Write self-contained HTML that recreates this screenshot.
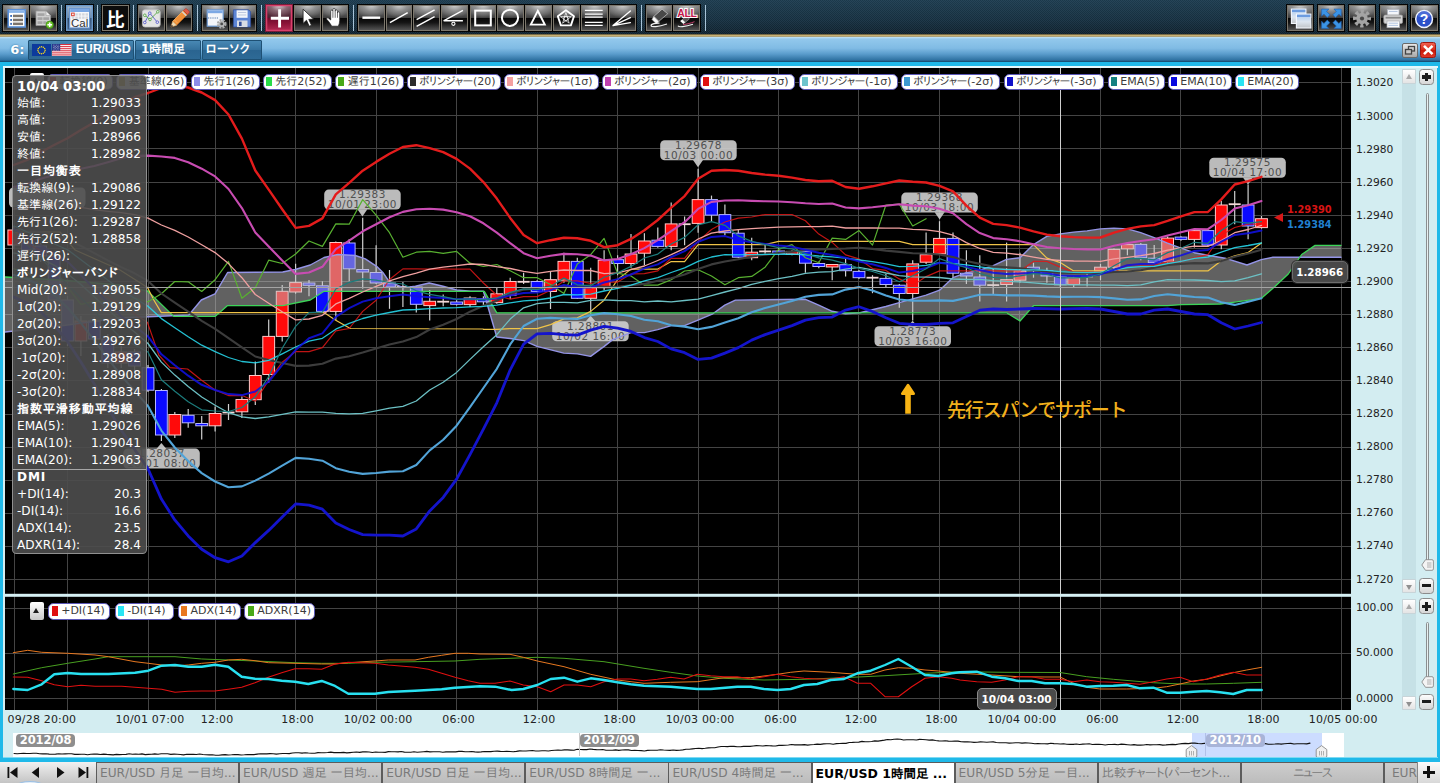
<!DOCTYPE html><html lang="ja"><head><meta charset="utf-8"><title>EUR/USD 1時間足</title><style>
*{box-sizing:border-box;margin:0;padding:0}
html,body{width:1440px;height:783px;overflow:hidden;background:#000}
body{position:relative;font-family:"DejaVu Sans","IPAPGothic","IPAGothic","Liberation Sans","Noto Sans CJK JP",sans-serif;font-size:11px;color:#222}
.abs{position:absolute}
#tb{left:0;top:0;width:1440px;height:35px;background-color:#152c3b;
 background-image:linear-gradient(45deg,rgba(150,190,215,.085) 25%,transparent 25%,transparent 75%,rgba(150,190,215,.085) 75%),linear-gradient(45deg,rgba(150,190,215,.085) 25%,transparent 25%,transparent 75%,rgba(150,190,215,.085) 75%),linear-gradient(180deg,#1c3a4c 0%,#152d3c 60%,#0e1f2a 100%);
 background-size:2px 2px,2px 2px,100% 100%;background-position:0 0,1px 1px,0 0}
#gold{left:0;top:34px;width:1440px;height:3px;background:linear-gradient(180deg,#2a2618 0,#cdb77a 35%,#bca468 75%,#8c9ca0 100%)}
#title{left:0;top:37px;width:1440px;height:25px;background:linear-gradient(180deg,#c4e4f6 0,#92c8ec 8%,#80bbe4 45%,#5a9ccc 68%,#2f72a2 92%,#124566 100%)}
#frame{left:0;top:62px;width:1440px;height:700px;background:#1fb9e9}
#inner{left:3px;top:66px;width:1434px;height:691px;background:#d3edf1}
.btn{position:absolute;top:3.9px;width:28.7px;height:28px;border:1.3px solid #040404;outline:0;
 background:radial-gradient(ellipse 62% 100% at 50% 0%,rgba(215,215,215,.95) 0,rgba(165,165,165,.6) 50%,rgba(90,90,90,0) 100%) 0 0/100% 50% no-repeat,linear-gradient(180deg,#7c7c7c 0,#545454 35%,#3c3c3c 49.9%,#060606 50%,#151515 68%,#5c5c5c 100%);
 box-shadow:inset 0 0 0 1px #7c776c}
.btn svg{position:absolute;left:0;top:0;width:26.1px;height:25.4px}
.btn.sel{background:radial-gradient(ellipse 62% 100% at 50% 0%,rgba(225,215,220,.95) 0,rgba(170,140,150,.55) 50%,rgba(120,60,80,0) 100%) 0 0/100% 50% no-repeat,linear-gradient(180deg,#6c4854 0,#4c2030 49.9%,#6e0c2c 50%,#8c1438 72%,#b42c54 100%);box-shadow:inset 0 0 0 1.3px #d8406c;border-color:#7a1c38}
.btn.hl{box-shadow:inset 0 0 0 1.5px #6a98c8;background:linear-gradient(180deg,#a8bcd0 0,#6c88a4 49%,#2c4868 50%,#46648a 100%)}
.btn.blk{background:#0c0c0c}
.sep{position:absolute;top:5px;width:1px;height:26px;background:#a8c4d8}
.tbtn{position:absolute;top:40px;height:19.500px;border:1px solid #1e5074;border-radius:1px;background:linear-gradient(180deg,#4888b4 0,#34709c 50%,#2a6490 51%,#2e6a96 100%);color:#fff;font-weight:bold;font-size:12px;line-height:17px;white-space:nowrap}
.pill{position:absolute;overflow:hidden;height:16.5px;background:#fff;border:1.3px solid #5c58b8;border-radius:5.5px;font-size:11px;line-height:14px;color:#3c3c3c;white-space:nowrap;padding-left:11.8px}
.pill i{position:absolute;left:2.4px;top:2.3px;width:5.8px;height:9.6px}
.k{display:inline-block;transform:scaleX(.86);transform-origin:0 50%}
.callout{position:absolute;width:76.5px;height:20px;background:rgba(206,206,206,.86);border-radius:4.5px;color:#444;font-size:10.5px;line-height:10.3px;text-align:center;letter-spacing:.5px;padding-top:0;white-space:nowrap}
.ax{position:absolute;left:1356px;font-size:10.7px;color:#222;line-height:12px}
.xl{position:absolute;top:713.5px;font-size:11px;letter-spacing:.17px;color:#222;line-height:12px;white-space:nowrap;transform:translateX(-50%)}
.sb{position:absolute;left:1402px;width:14px;height:14.5px;background:linear-gradient(180deg,#fff,#e4e4e4);border:1px solid #c8d4d8;border-radius:1px}
.sb:after{content:"";position:absolute;left:3px;border:3.5px solid transparent}
.sb.up:after{top:0.5px;border-bottom:5px solid #a8a8a8}
.sb.dn:after{top:5px;border-top:5px solid #909090}
.zb{position:absolute;left:1419.2px;width:14.6px;height:16.4px;border:1px solid #8c8c8c;border-radius:3.5px;background:linear-gradient(180deg,#fdfdfd,#d6d6d6)}
.zb b{position:absolute;left:1.9px;top:5.600px;width:8.800px;height:3.200px;background:#1c1c1c}
.zb.p u{position:absolute;left:4.700px;top:2.800px;width:3.200px;height:8.800px;background:#1c1c1c}
.knob{position:absolute;left:1420.5px;width:13px;height:12px}
#tip{left:12px;top:74.5px;width:135px;height:479px;font-size:12.1px;background:rgba(78,78,78,.9);border:1px solid rgba(170,170,170,.75);border-radius:4.5px;color:#fff}
#tip div{position:absolute;left:4px;right:5.1px;height:17px;line-height:17px;white-space:nowrap}
#tip div span{position:absolute;right:0;top:0}
#tip .b{font-weight:bold;letter-spacing:.85px}#tip .b.l{letter-spacing:0}
.tab{position:absolute;top:762px;height:21px;width:143.3px;background:linear-gradient(180deg,#cdcdcd,#bcbcbc);border:1px solid #5c5c5c;border-bottom:0;color:#7a7a7a;font-size:12.2px;line-height:21px;padding-left:3px;white-space:nowrap;overflow:hidden}
.tab.act{background:#fff;color:#000;font-weight:bold;font-size:12.5px}
</style></head><body>
<div id="tb" class="abs"></div><div id="gold" class="abs"></div><div id="title" class="abs"></div>
<div class="btn " style="left:1.5px"><svg viewBox="0 0 26.1 25.4"><rect x="5.2" y="4.8" width="17" height="17.2" fill="#fff" stroke="#5a90d8" stroke-width="1.6"/><rect x="6" y="5.600" width="15.400" height="2.300" fill="#8ab4e8"/><g fill="#7c746c"><rect x="10" y="9.700" width="10" height="2.500"/><rect x="10" y="13.700" width="10" height="2.500"/><rect x="10" y="17.600" width="10" height="2.500"/></g><g fill="#3c6cb8"><rect x="7.200" y="10" width="1.800" height="1.900"/><rect x="7.200" y="14" width="1.800" height="1.900"/><rect x="7.200" y="17.900" width="1.800" height="1.900"/></g></svg></div>
<div class="btn " style="left:29.0px"><svg viewBox="0 0 26.1 25.4"><path d="M6 6h10l4.600 4.600v10H6z" fill="#d0d0d0" stroke="#9a9a9a" stroke-width=".8"/><path d="M16 6v4.600h4.600z" fill="#eee" stroke="#9a9a9a" stroke-width=".6"/><g fill="#a4a4a4"><rect x="7.500" y="8.300" width="7" height="2.600"/><rect x="7.500" y="12.300" width="5" height="2.600"/><rect x="13.300" y="12.300" width="5.800" height="2.600"/><rect x="7.500" y="16.300" width="5" height="2.600"/><rect x="13.300" y="16.300" width="3" height="2.600"/></g><circle cx="19.700" cy="19.800" r="3.700" fill="#6cc428" stroke="#3a8c14" stroke-width=".7"/><path d="M19.700 17.500v4.600M17.400 19.800h4.600" stroke="#fff" stroke-width="1.500"/></svg></div>
<div class="btn hl" style="left:65.0px"><svg viewBox="0 0 26.1 25.4"><rect x="3.600" y="3.400" width="20" height="19.600" fill="#f8f8fa" stroke="#6c98d0" stroke-width="1.200"/><rect x="4.200" y="4" width="18.800" height="3" fill="#7ca8e4"/><g fill="#d4d6dc"><rect x="9.300" y="8.300" width="2.500" height="2.300"/><rect x="12.700" y="8.300" width="2.500" height="2.300"/><rect x="16.100" y="8.300" width="2.500" height="2.300"/><rect x="19.500" y="8.300" width="2.500" height="2.300"/><rect x="9.300" y="11.500" width="2.500" height="2.300"/><rect x="12.700" y="11.500" width="2.500" height="2.300"/><rect x="16.100" y="11.500" width="2.500" height="2.300"/><rect x="19.500" y="11.500" width="2.500" height="2.300"/><rect x="5.800" y="11.500" width="2.500" height="2.300"/></g><rect x="5.600" y="8.100" width="2.600" height="2.600" fill="#fff" stroke="#d84030" stroke-width="1"/><text x="5" y="21.800" font-size="11.500" fill="#333" font-family="Liberation Sans,sans-serif">Cal</text></svg></div>
<div class="btn blk" style="left:101.0px"><svg viewBox="0 0 26.1 25.4"><text x="13.200" y="20.800" font-size="18.500" font-weight="bold" fill="#fff" text-anchor="middle" font-family="Noto Sans CJK JP,IPAGothic,sans-serif">比</text></svg></div>
<div class="btn " style="left:137.0px"><svg viewBox="0 0 26.1 25.4"><rect x="4.400" y="4.800" width="17.800" height="17.200" rx="2.500" fill="#e4e4e4" stroke="#c4c4c4" stroke-width=".8"/><path d="M6.800 17.500l5-9.300 7.500 9" stroke="#5a5ccc" stroke-width=".9" fill="none"/><path d="M6.800 10.300l5.200 4.200L19.800 6.800" stroke="#58a848" stroke-width=".9" fill="none"/><g fill="#eee" stroke-width=".9"><circle cx="6.800" cy="17.500" r="1.300" stroke="#5a5ccc"/><circle cx="11.800" cy="8.200" r="1.300" stroke="#5a5ccc"/><circle cx="19.300" cy="17.200" r="1.300" stroke="#5a5ccc"/><circle cx="6.800" cy="10.300" r="1.300" stroke="#58a848"/><circle cx="12" cy="14.500" r="1.300" stroke="#58a848"/><circle cx="19.800" cy="6.800" r="1.300" stroke="#58a848"/></g></svg></div>
<div class="btn " style="left:164.6px"><svg viewBox="0 0 26.1 25.4"><path d="M5 22l1.700-5.700L17.500 5.500l4 4L10.700 20.300z" fill="#f09038" stroke="#b0601c" stroke-width=".7"/><path d="M8.500 15l3 3M17.500 5.500L6.700 16.300" stroke="#f8b870" stroke-width=".8" fill="none"/><path d="M5 22l1.700-5.700 4 4z" fill="#f0dcb8" stroke="#b09060" stroke-width=".4"/><path d="M5 22l.7-2.300 1.600 1.600z" fill="#222"/><path d="M17.500 5.500l1.600-1.600a1.200 1.200 0 011.700 0l2.300 2.300a1.200 1.200 0 010 1.700l-1.600 1.600z" fill="#e05c48" stroke="#a83020" stroke-width=".5"/><path d="M16.300 6.700l4 4" stroke="#d8d8d8" stroke-width="1.300"/></svg></div>
<div class="btn " style="left:201.0px"><svg viewBox="0 0 26.1 25.4"><rect x="5.200" y="4.800" width="16" height="16.400" fill="#f4f6fa" stroke="#6c98d0" stroke-width="1.200"/><rect x="5.800" y="5.400" width="14.800" height="2.800" fill="#7ca8e4"/><path d="M6 13h11" stroke="#5078b0" stroke-width="1.100" stroke-dasharray="1.200 1"/><circle cx="19.700" cy="18.900" r="3.600" fill="none" stroke="#a8a8a8" stroke-width="2.600" stroke-dasharray="1.900 1"/><circle cx="19.700" cy="18.900" r="3" fill="#b4b4b4"/><circle cx="19.700" cy="18.900" r="1.400" fill="#4c4c4c"/></svg></div>
<div class="btn " style="left:228.4px"><svg viewBox="0 0 26.1 25.4"><path d="M4.400 4.800h15.200l2 2v15.200H4.400z" fill="#5c84d4" stroke="#34509c" stroke-width=".8"/><rect x="7.600" y="5.300" width="11" height="7.500" fill="#f4f6fa"/><path d="M9 7.500h8.200M9 10h8.200" stroke="#b8c4dc" stroke-width=".9"/><rect x="8" y="15.500" width="10.500" height="6.500" fill="#d8dce4"/><rect x="10" y="16.700" width="2.600" height="4.300" fill="#34509c"/></svg></div>
<div class="btn sel" style="left:264.5px"><svg viewBox="0 0 26.1 25.4"><path d="M13.600 4.200v18.300M4.800 13.300h18.200" stroke="#fff" stroke-width="2.900"/></svg></div>
<div class="btn " style="left:293.2px"><svg viewBox="0 0 26.1 25.4"><path d="M9.100 4.200v14.200l3.400-3.100 2.700 6 2.300-1-2.700-5.900 4.700-.3z" fill="#fff" stroke="#1c1c1c" stroke-width=".8" stroke-linejoin="round"/></svg></div>
<div class="btn " style="left:320.8px"><svg viewBox="0 0 26.1 25.4"><path d="M9.600 21.200c-.5-1.300-2.400-4.300-4.700-6.600-.9-1 .3-2.300 1.500-1.500l2.300 1.900V6.300c0-1.600 2.200-1.600 2.200 0V4.600c0-1.600 2.300-1.600 2.300 0v1.500c0-1.600 2.300-1.600 2.300.1v1.800c0-1.500 2.200-1.500 2.200.1v7.300c0 2.200-.6 3.800-1.300 5.800z" fill="#fff" stroke="#222" stroke-width=".7" stroke-linejoin="round"/><path d="M10.900 6.500v6.300M13.200 6v6.800M15.500 7.800v5" stroke="#333" stroke-width=".7"/></svg></div>
<div class="btn " style="left:357.0px"><svg viewBox="0 0 26.1 25.4"><path d="M4.400 12.700h17.800" stroke="#fff" stroke-width="2.400"/></svg></div>
<div class="btn " style="left:384.6px"><svg viewBox="0 0 26.1 25.4"><path d="M3.900 17.600L21.700 7.600" stroke="#fff" stroke-width="1.500"/></svg></div>
<div class="btn " style="left:412.4px"><svg viewBox="0 0 26.1 25.4"><path d="M3.600 14.600L21.600 4.800M3.600 21.400L21.600 11.700" stroke="#fff" stroke-width="1.500"/></svg></div>
<div class="btn " style="left:440.4px"><svg viewBox="0 0 26.1 25.4"><path d="M21.900 5.300L3 15.700h18.900" stroke="#fff" stroke-width="1.400" fill="none" stroke-linejoin="round"/><circle cx="12.400" cy="18.800" r="1.600" stroke="#fff" stroke-width="1.100" fill="none"/></svg></div>
<div class="btn " style="left:468.6px"><svg viewBox="0 0 26.1 25.4"><rect x="5.200" y="5.600" width="15.600" height="14.800" stroke="#fff" stroke-width="2" fill="none"/></svg></div>
<div class="btn " style="left:496.4px"><svg viewBox="0 0 26.1 25.4"><circle cx="13" cy="12.800" r="8.100" stroke="#fff" stroke-width="2" fill="none"/></svg></div>
<div class="btn " style="left:524.4px"><svg viewBox="0 0 26.1 25.4"><path d="M12.800 5.800l7 13.800H5.800z" stroke="#fff" stroke-width="1.900" fill="none"/></svg></div>
<div class="btn " style="left:552.4px"><svg viewBox="0 0 26.1 25.4"><path d="M12.900 5.200l8.100 6-3.100 9.200H7.900L4.800 11.200z" stroke="#fff" stroke-width="1.900" fill="none" stroke-linejoin="round"/><path d="M12.900 7.500l3.300 10.700-8.700-6.600h10.800l-8.700 6.600z" stroke="#fff" stroke-width=".7" fill="none"/><circle cx="12.900" cy="13.700" r="2.200" stroke="#fff" stroke-width=".6" fill="none"/></svg></div>
<div class="btn " style="left:580.4px"><svg viewBox="0 0 26.1 25.4"><path d="M3.900 5.300h17.800M3.900 9.200h17.800M3.900 12.200h17.800M3.900 17.300h17.800M3.900 20.300h17.800" stroke="#fff" stroke-width="1.200"/></svg></div>
<div class="btn " style="left:608.4px"><svg viewBox="0 0 26.1 25.4"><path d="M4 20.600L21.400 5.900M4 20.600l17.400-8M4 20.600l17.400-3" stroke="#fff" stroke-width="1.300" stroke-linecap="round"/></svg></div>
<div class="btn " style="left:644.6px"><svg viewBox="0 0 26.1 25.4"><path d="M7.800 11.400l8.300-7.200 5.600 4.500-8.900 7.700z" fill="#484848" stroke="#c8c8c8" stroke-width=".7"/><path d="M7.800 11.400l5 5-2.300 2.600-4.500-4.500z" fill="#fafafa" stroke="#bbb" stroke-width=".5"/><path d="M5 20.800c0-2.200 5-2.800 8.500-2.600M5 20.800c.5 1.500 7 1.200 16-1.800" stroke="#f0f0f0" stroke-width="1.200" fill="none"/></svg></div>
<div class="btn " style="left:672.4px"><svg viewBox="0 0 26.1 25.4"><path d="M9.300 14.500l4-3.300 3.200 2.600-4.300 3.600z" fill="#585858" stroke="#c8c8c8" stroke-width=".5"/><path d="M9.300 14.500l2.900 2.900-1.800 1.700-3.300-3z" fill="#fafafa"/><path d="M5 20.800c.5 1.500 7 1.200 15-1.600" stroke="#f0f0f0" stroke-width="1.100" fill="none"/><path d="M10 19.600c4-.4 8-1.500 11.500-2.900" stroke="#d04070" stroke-width=".9" fill="none"/><text x="13.900" y="11.800" font-size="10.500" font-weight="bold" fill="#c4184c" stroke="#fff" stroke-width="2" paint-order="stroke" text-anchor="middle" font-family="Liberation Sans,sans-serif" letter-spacing="-.3">ALL</text></svg></div>
<div class="btn " style="left:1285.5px"><svg viewBox="0 0 26.1 25.4"><defs><linearGradient id="wg" x1="0" y1="0" x2="0" y2="1"><stop offset="0" stop-color="#a8c8f0"/><stop offset=".55" stop-color="#dde6f0"/><stop offset="1" stop-color="#c0c4c8"/></linearGradient></defs><rect x="4.400" y="4.100" width="14.500" height="14.400" fill="url(#wg)" stroke="#f4f8ff" stroke-width="1.100"/><rect x="5" y="4.700" width="13.300" height="2.300" fill="#6c9ce0"/><rect x="9.400" y="9.100" width="14.500" height="13.900" fill="url(#wg)" stroke="#f4f8ff" stroke-width="1.100"/><rect x="10" y="9.700" width="13.300" height="2.300" fill="#6c9ce0"/></svg></div>
<div class="btn " style="left:1316.7px"><svg viewBox="0 0 26.1 25.4"><g fill="#3c94e4" stroke="#1c60b4" stroke-width=".6" stroke-linejoin="round"><path d="M3.600 4.100h7.200l-2.300 2.300 3.400 3.400-2.600 2.600-3.400-3.400-2.300 2.300z"/><path d="M23.200 4.100v7.200l-2.300-2.300-3.400 3.400-2.600-2.600 3.400-3.400-2.300-2.300z"/><path d="M3.600 23.400v-7.200l2.300 2.300 3.400-3.400 2.600 2.600-3.400 3.400 2.300 2.300z"/><path d="M23.200 23.400h-7.200l2.300-2.300-3.400-3.400 2.600-2.600 3.400 3.400 2.300-2.300z"/></g></svg></div>
<div class="btn " style="left:1347.8px"><svg viewBox="0 0 26.1 25.4"><circle cx="13" cy="13.500" r="7" fill="none" stroke="#a4a4a4" stroke-width="4" stroke-dasharray="3.100 2.400" stroke-dashoffset="1.500"/><circle cx="13" cy="13.500" r="5.800" fill="#a4a4a4"/><circle cx="13" cy="13.500" r="2.100" fill="#4a4a4a"/></svg></div>
<div class="btn " style="left:1378.9px"><svg viewBox="0 0 26.1 25.4"><rect x="7.500" y="4.500" width="11.500" height="6" fill="#f4f6fa" stroke="#b0b4bc" stroke-width=".7"/><path d="M9 6.500h8.500" stroke="#b8c8e0" stroke-width="1"/><rect x="3.800" y="10" width="18.800" height="8.500" rx="1.400" fill="#d4d4d4" stroke="#989898" stroke-width=".8"/><rect x="5.500" y="11.800" width="15.400" height="1.800" fill="#888"/><rect x="7" y="16" width="12.500" height="6.700" fill="#fafafa" stroke="#a8acb4" stroke-width=".7"/><path d="M8.500 18.200h9.500M8.500 20.400h9.500" stroke="#a8c0e0" stroke-width=".9"/></svg></div>
<div class="btn " style="left:1410.0px"><svg viewBox="0 0 26.1 25.4"><circle cx="13.100" cy="14" r="8.400" fill="#2c50c8" stroke="#f0f4ff" stroke-width="1.500"/><path d="M6.500 11a7 7 0 0113.200 0c-3 2-10 2-13.200 0z" fill="#5878dc" opacity=".7"/><text x="13.100" y="19" font-size="14" font-weight="bold" fill="#fff" text-anchor="middle" font-family="Liberation Sans,sans-serif">?</text></svg></div>
<div class="sep" style="left:61px"></div>
<div class="sep" style="left:97.4px"></div>
<div class="sep" style="left:133.3px"></div>
<div class="sep" style="left:197px"></div>
<div class="sep" style="left:261px"></div>
<div class="sep" style="left:353px"></div>
<div class="sep" style="left:641.2px"></div>
<div class="sep" style="left:705.4px"></div>
<div class="abs" style="left:10.200px;top:42px;color:#fff;font-weight:bold;font-size:13px;line-height:16px;text-shadow:0 0 2px #2a6a9a">6:</div>
<div class="tbtn" style="left:28.2px;width:105.600px"><svg class="abs" style="left:3px;top:2.5px" width="19" height="12.5" viewBox="0 0 19 12.5"><rect width="19" height="12.5" fill="#0c3a9c"/><g fill="#f8d820"><circle cx="13.10" cy="6.25" r=".75"/><circle cx="12.62" cy="8.05" r=".75"/><circle cx="11.30" cy="9.37" r=".75"/><circle cx="9.50" cy="9.85" r=".75"/><circle cx="7.70" cy="9.37" r=".75"/><circle cx="6.38" cy="8.05" r=".75"/><circle cx="5.90" cy="6.25" r=".75"/><circle cx="6.38" cy="4.45" r=".75"/><circle cx="7.70" cy="3.13" r=".75"/><circle cx="9.50" cy="2.65" r=".75"/><circle cx="11.30" cy="3.13" r=".75"/><circle cx="12.62" cy="4.45" r=".75"/></g></svg><svg class="abs" style="left:23px;top:2.5px" width="19.5" height="12.5" viewBox="0 0 19.5 12.5"><rect width="19.5" height="12.5" fill="#fff"/><g fill="#d82838"><rect y="0.00" width="19.5" height=".96"/><rect y="1.92" width="19.5" height=".96"/><rect y="3.85" width="19.5" height=".96"/><rect y="5.77" width="19.5" height=".96"/><rect y="7.69" width="19.5" height=".96"/><rect y="9.62" width="19.5" height=".96"/><rect y="11.54" width="19.5" height=".96"/></g><rect width="8.2" height="6.7" fill="#28388c"/><g fill="#fff"><rect x="1.0" y="0.80" width=".6" height=".6"/><rect x="2.6" y="0.80" width=".6" height=".6"/><rect x="4.2" y="0.80" width=".6" height=".6"/><rect x="5.8" y="0.80" width=".6" height=".6"/><rect x="1.8" y="2.05" width=".6" height=".6"/><rect x="3.4" y="2.05" width=".6" height=".6"/><rect x="5.0" y="2.05" width=".6" height=".6"/><rect x="6.6" y="2.05" width=".6" height=".6"/><rect x="1.0" y="3.30" width=".6" height=".6"/><rect x="2.6" y="3.30" width=".6" height=".6"/><rect x="4.2" y="3.30" width=".6" height=".6"/><rect x="5.8" y="3.30" width=".6" height=".6"/><rect x="1.8" y="4.55" width=".6" height=".6"/><rect x="3.4" y="4.55" width=".6" height=".6"/><rect x="5.0" y="4.55" width=".6" height=".6"/><rect x="6.6" y="4.55" width=".6" height=".6"/><rect x="1.0" y="5.80" width=".6" height=".6"/><rect x="2.6" y="5.80" width=".6" height=".6"/><rect x="4.2" y="5.80" width=".6" height=".6"/><rect x="5.8" y="5.80" width=".6" height=".6"/></g></svg><span class="abs" style="left:46.500px;top:0;font-family:'Liberation Sans',sans-serif;font-size:12.5px;letter-spacing:-.2px">EUR/USD</span></div>
<div class="tbtn" style="left:135px;width:65.5px;padding-left:5px">1時間足</div>
<div class="tbtn" style="left:202.300px;width:59.400px;padding-left:2.500px;letter-spacing:.9px">ローソク</div>
<div class="abs" style="left:1402px;top:43px;width:15.5px;height:14.5px;border:1px solid #6a6a6a;border-radius:2px;background:linear-gradient(180deg,#e8e8e8,#a8a8a8)"><svg width="14" height="13" viewBox="0 0 14 13"><rect x="5.5" y="2.5" width="6" height="4.5" fill="none" stroke="#444" stroke-width="1.3"/><rect x="2.5" y="5.500" width="6" height="4.500" fill="#c8c8c8" stroke="#444" stroke-width="1.3"/></svg></div>
<div class="abs" style="left:1419.5px;top:42px;width:16.5px;height:16px;border:1px solid #a01810;border-radius:2.5px;background:linear-gradient(180deg,#f06050,#d82818 50%,#c81808 51%,#e03828)"><svg width="14.5" height="14" viewBox="0 0 14.5 14"><path d="M3 2.800l8.500 8.400M11.500 2.800L3 11.200" stroke="#fff" stroke-width="2.600"/></svg></div>
<div id="frame" class="abs"></div><div id="inner" class="abs"></div>
<div class="abs" style="left:3px;top:66px;width:1435px;height:2px;background:#e4f8fc"></div>
<svg class="abs" style="left:5px;top:68px" width="1346" height="642.3" viewBox="5 68 1346 642.3"><rect x="5" y="68" width="1346" height="643" fill="#000"/>
<g stroke="#444" stroke-width="1" shape-rendering="crispEdges"><line x1="5" x2="1351" y1="82.6" y2="82.6"/><line x1="5" x2="1351" y1="115.8" y2="115.8"/><line x1="5" x2="1351" y1="148.9" y2="148.9"/><line x1="5" x2="1351" y1="182.1" y2="182.1"/><line x1="5" x2="1351" y1="215.2" y2="215.2"/><line x1="5" x2="1351" y1="248.4" y2="248.4"/><line x1="5" x2="1351" y1="281.6" y2="281.6"/><line x1="5" x2="1351" y1="314.7" y2="314.7"/><line x1="5" x2="1351" y1="347.9" y2="347.9"/><line x1="5" x2="1351" y1="381.0" y2="381.0"/><line x1="5" x2="1351" y1="414.2" y2="414.2"/><line x1="5" x2="1351" y1="447.4" y2="447.4"/><line x1="5" x2="1351" y1="480.5" y2="480.5"/><line x1="5" x2="1351" y1="513.7" y2="513.7"/><line x1="5" x2="1351" y1="546.8" y2="546.8"/><line x1="5" x2="1351" y1="580.0" y2="580.0"/><line x1="5" x2="1351" y1="608.3" y2="608.3"/><line x1="5" x2="1351" y1="654.0" y2="654.0"/><line x1="5" x2="1351" y1="699.0" y2="699.0"/><line x1="14.4" x2="14.4" y1="68" y2="710"/><line x1="67.5" x2="67.5" y1="68" y2="710"/><line x1="148.0" x2="148.0" y1="68" y2="710"/><line x1="215.1" x2="215.1" y1="68" y2="710"/><line x1="295.6" x2="295.6" y1="68" y2="710"/><line x1="376.1" x2="376.1" y1="68" y2="710"/><line x1="456.6" x2="456.6" y1="68" y2="710"/><line x1="537.1" x2="537.1" y1="68" y2="710"/><line x1="617.6" x2="617.6" y1="68" y2="710"/><line x1="698.1" x2="698.1" y1="68" y2="710"/><line x1="778.6" x2="778.6" y1="68" y2="710"/><line x1="859.0" x2="859.0" y1="68" y2="710"/><line x1="939.5" x2="939.5" y1="68" y2="710"/><line x1="1020.0" x2="1020.0" y1="68" y2="710"/><line x1="1100.5" x2="1100.5" y1="68" y2="710"/><line x1="1181.0" x2="1181.0" y1="68" y2="710"/><line x1="1261.5" x2="1261.5" y1="68" y2="710"/><line x1="1342.0" x2="1342.0" y1="68" y2="710"/></g>
<g><line x1="13.8" x2="13.8" y1="226.0" y2="249.0" stroke="#d0d0d0" stroke-width="1.2"/><rect x="7.9" y="230.0" width="11.8" height="15.0" fill="#ff0a0a" stroke="#ffc8c8" stroke-width="1"/><line x1="27.3" x2="27.3" y1="238.0" y2="254.0" stroke="#d0d0d0" stroke-width="1.2"/><rect x="21.4" y="243.0" width="11.8" height="7.0" fill="#0a0aff" stroke="#b4b4ff" stroke-width="1"/><line x1="40.7" x2="40.7" y1="243.0" y2="262.0" stroke="#d0d0d0" stroke-width="1.2"/><rect x="34.8" y="246.0" width="11.8" height="10.0" fill="#0a0aff" stroke="#b4b4ff" stroke-width="1"/><line x1="54.1" x2="54.1" y1="252.0" y2="304.0" stroke="#d0d0d0" stroke-width="1.2"/><rect x="48.2" y="256.0" width="11.8" height="44.0" fill="#0a0aff" stroke="#b4b4ff" stroke-width="1"/><line x1="67.5" x2="67.5" y1="296.0" y2="346.0" stroke="#d0d0d0" stroke-width="1.2"/><rect x="61.6" y="300.0" width="11.8" height="41.0" fill="#0a0aff" stroke="#b4b4ff" stroke-width="1"/><line x1="80.9" x2="80.9" y1="316.0" y2="356.0" stroke="#d0d0d0" stroke-width="1.2"/><rect x="75.0" y="321.0" width="11.8" height="20.0" fill="#ff0a0a" stroke="#ffc8c8" stroke-width="1"/><line x1="94.3" x2="94.3" y1="317.0" y2="344.0" stroke="#d0d0d0" stroke-width="1.2"/><rect x="88.4" y="321.0" width="11.8" height="18.0" fill="#0a0aff" stroke="#b4b4ff" stroke-width="1"/><line x1="107.8" x2="107.8" y1="334.0" y2="368.0" stroke="#d0d0d0" stroke-width="1.2"/><rect x="101.9" y="339.0" width="11.8" height="24.0" fill="#0a0aff" stroke="#b4b4ff" stroke-width="1"/><line x1="121.2" x2="121.2" y1="346.0" y2="368.0" stroke="#d0d0d0" stroke-width="1.2"/><rect x="115.3" y="352.0" width="11.8" height="11.0" fill="#ff0a0a" stroke="#ffc8c8" stroke-width="1"/><line x1="134.6" x2="134.6" y1="349.0" y2="371.0" stroke="#d0d0d0" stroke-width="1.2"/><rect x="128.7" y="352.0" width="11.8" height="14.0" fill="#0a0aff" stroke="#b4b4ff" stroke-width="1"/><line x1="148.0" x2="148.0" y1="365.0" y2="392.0" stroke="#d0d0d0" stroke-width="1.2"/><rect x="142.1" y="367.7" width="11.8" height="22.5" fill="#0a0aff" stroke="#b4b4ff" stroke-width="1"/><line x1="161.4" x2="161.4" y1="389.0" y2="441.0" stroke="#d0d0d0" stroke-width="1.2"/><rect x="155.5" y="390.5" width="11.8" height="44.5" fill="#0a0aff" stroke="#b4b4ff" stroke-width="1"/><line x1="174.8" x2="174.8" y1="412.0" y2="438.0" stroke="#d0d0d0" stroke-width="1.2"/><rect x="168.9" y="414.5" width="11.8" height="20.5" fill="#ff0a0a" stroke="#ffc8c8" stroke-width="1"/><line x1="188.2" x2="188.2" y1="409.0" y2="427.8" stroke="#d0d0d0" stroke-width="1.2"/><rect x="182.3" y="415.3" width="11.8" height="7.5" fill="#0a0aff" stroke="#b4b4ff" stroke-width="1"/><line x1="201.7" x2="201.7" y1="416.0" y2="439.5" stroke="#d0d0d0" stroke-width="1.2"/><rect x="195.8" y="423.5" width="11.8" height="2.3" fill="#0a0aff" stroke="#b4b4ff" stroke-width="1"/><line x1="215.1" x2="215.1" y1="406.5" y2="431.5" stroke="#d0d0d0" stroke-width="1.2"/><rect x="209.2" y="413.5" width="11.8" height="12.3" fill="#ff0a0a" stroke="#ffc8c8" stroke-width="1"/><line x1="228.5" x2="228.5" y1="404.0" y2="420.0" stroke="#d0d0d0" stroke-width="1.2"/><line x1="222.5" x2="234.5" y1="412.5" y2="412.5" stroke="#f4d8d8" stroke-width="1.8"/><line x1="241.9" x2="241.9" y1="396.5" y2="418.0" stroke="#d0d0d0" stroke-width="1.2"/><rect x="236.0" y="399.5" width="11.8" height="12.3" fill="#ff0a0a" stroke="#ffc8c8" stroke-width="1"/><line x1="255.3" x2="255.3" y1="361.4" y2="405.0" stroke="#d0d0d0" stroke-width="1.2"/><rect x="249.4" y="375.5" width="11.8" height="24.2" fill="#ff0a0a" stroke="#ffc8c8" stroke-width="1"/><line x1="268.7" x2="268.7" y1="319.6" y2="382.7" stroke="#d0d0d0" stroke-width="1.2"/><rect x="262.8" y="336.4" width="11.8" height="38.1" fill="#ff0a0a" stroke="#ffc8c8" stroke-width="1"/><line x1="282.2" x2="282.2" y1="285.0" y2="341.4" stroke="#d0d0d0" stroke-width="1.2"/><rect x="276.3" y="291.3" width="11.8" height="45.1" fill="#ff0a0a" stroke="#ffc8c8" stroke-width="1"/><line x1="295.6" x2="295.6" y1="263.8" y2="293.8" stroke="#d0d0d0" stroke-width="1.2"/><rect x="289.7" y="282.6" width="11.8" height="9.4" fill="#ff0a0a" stroke="#ffc8c8" stroke-width="1"/><line x1="309.0" x2="309.0" y1="280.0" y2="296.3" stroke="#d0d0d0" stroke-width="1.2"/><rect x="303.1" y="283.0" width="11.8" height="2.3" fill="#0a0aff" stroke="#b4b4ff" stroke-width="1"/><line x1="322.4" x2="322.4" y1="281.3" y2="312.6" stroke="#d0d0d0" stroke-width="1.2"/><rect x="316.5" y="285.8" width="11.8" height="25.6" fill="#0a0aff" stroke="#b4b4ff" stroke-width="1"/><line x1="335.8" x2="335.8" y1="241.5" y2="320.0" stroke="#d0d0d0" stroke-width="1.2"/><rect x="329.9" y="242.5" width="11.8" height="68.9" fill="#ff0a0a" stroke="#ffc8c8" stroke-width="1"/><line x1="349.2" x2="349.2" y1="239.0" y2="281.3" stroke="#d0d0d0" stroke-width="1.2"/><rect x="343.3" y="243.0" width="11.8" height="25.8" fill="#0a0aff" stroke="#b4b4ff" stroke-width="1"/><line x1="362.7" x2="362.7" y1="217.7" y2="288.8" stroke="#d0d0d0" stroke-width="1.2"/><rect x="356.8" y="269.5" width="11.8" height="2.5" fill="#0a0aff" stroke="#b4b4ff" stroke-width="1"/><line x1="376.1" x2="376.1" y1="245.3" y2="284.0" stroke="#d0d0d0" stroke-width="1.2"/><rect x="370.2" y="272.5" width="11.8" height="10.5" fill="#0a0aff" stroke="#b4b4ff" stroke-width="1"/><line x1="389.5" x2="389.5" y1="270.0" y2="308.8" stroke="#d0d0d0" stroke-width="1.2"/><rect x="383.6" y="283.0" width="11.8" height="4.0" fill="#0a0aff" stroke="#b4b4ff" stroke-width="1"/><line x1="402.9" x2="402.9" y1="282.0" y2="307.0" stroke="#d0d0d0" stroke-width="1.2"/><line x1="396.9" x2="408.9" y1="287.0" y2="287.0" stroke="#f4d8d8" stroke-width="1.8"/><line x1="416.3" x2="416.3" y1="286.0" y2="312.6" stroke="#d0d0d0" stroke-width="1.2"/><rect x="410.4" y="287.0" width="11.8" height="17.3" fill="#0a0aff" stroke="#b4b4ff" stroke-width="1"/><line x1="429.7" x2="429.7" y1="290.0" y2="320.6" stroke="#d0d0d0" stroke-width="1.2"/><rect x="423.8" y="301.3" width="11.8" height="4.3" fill="#ff0a0a" stroke="#ffc8c8" stroke-width="1"/><line x1="443.2" x2="443.2" y1="294.6" y2="306.3" stroke="#d0d0d0" stroke-width="1.2"/><line x1="437.2" x2="449.2" y1="301.7" y2="301.7" stroke="#f4d8d8" stroke-width="1.8"/><line x1="456.6" x2="456.6" y1="299.5" y2="305.6" stroke="#d0d0d0" stroke-width="1.2"/><rect x="450.7" y="302.0" width="11.8" height="2.3" fill="#0a0aff" stroke="#b4b4ff" stroke-width="1"/><line x1="470.0" x2="470.0" y1="296.3" y2="307.0" stroke="#d0d0d0" stroke-width="1.2"/><rect x="464.1" y="298.0" width="11.8" height="6.6" fill="#ff0a0a" stroke="#ffc8c8" stroke-width="1"/><line x1="483.4" x2="483.4" y1="296.3" y2="305.0" stroke="#d0d0d0" stroke-width="1.2"/><rect x="477.5" y="298.8" width="11.8" height="3.0" fill="#0a0aff" stroke="#b4b4ff" stroke-width="1"/><line x1="496.8" x2="496.8" y1="287.6" y2="303.8" stroke="#d0d0d0" stroke-width="1.2"/><rect x="490.9" y="293.8" width="11.8" height="8.8" fill="#ff0a0a" stroke="#ffc8c8" stroke-width="1"/><line x1="510.2" x2="510.2" y1="277.7" y2="299.0" stroke="#d0d0d0" stroke-width="1.2"/><rect x="504.3" y="281.5" width="11.8" height="13.7" fill="#ff0a0a" stroke="#ffc8c8" stroke-width="1"/><line x1="523.6" x2="523.6" y1="272.7" y2="284.0" stroke="#d0d0d0" stroke-width="1.2"/><line x1="517.6" x2="529.6" y1="281.8" y2="281.8" stroke="#f4d8d8" stroke-width="1.8"/><line x1="537.1" x2="537.1" y1="280.2" y2="292.7" stroke="#d0d0d0" stroke-width="1.2"/><rect x="531.2" y="281.5" width="11.8" height="10.0" fill="#0a0aff" stroke="#b4b4ff" stroke-width="1"/><line x1="550.5" x2="550.5" y1="271.5" y2="309.0" stroke="#d0d0d0" stroke-width="1.2"/><rect x="544.6" y="279.7" width="11.8" height="11.8" fill="#ff0a0a" stroke="#ffc8c8" stroke-width="1"/><line x1="563.9" x2="563.9" y1="252.7" y2="282.7" stroke="#d0d0d0" stroke-width="1.2"/><rect x="558.0" y="261.4" width="11.8" height="18.8" fill="#ff0a0a" stroke="#ffc8c8" stroke-width="1"/><line x1="577.3" x2="577.3" y1="257.7" y2="299.0" stroke="#d0d0d0" stroke-width="1.2"/><rect x="571.4" y="261.4" width="11.8" height="36.9" fill="#0a0aff" stroke="#b4b4ff" stroke-width="1"/><line x1="590.7" x2="590.7" y1="267.7" y2="314.0" stroke="#d0d0d0" stroke-width="1.2"/><rect x="584.8" y="287.7" width="11.8" height="10.6" fill="#ff0a0a" stroke="#ffc8c8" stroke-width="1"/><line x1="604.1" x2="604.1" y1="250.2" y2="290.2" stroke="#d0d0d0" stroke-width="1.2"/><rect x="598.2" y="260.2" width="11.8" height="27.5" fill="#ff0a0a" stroke="#ffc8c8" stroke-width="1"/><line x1="617.6" x2="617.6" y1="255.2" y2="275.2" stroke="#d0d0d0" stroke-width="1.2"/><rect x="611.7" y="259.7" width="11.8" height="3.8" fill="#0a0aff" stroke="#b4b4ff" stroke-width="1"/><line x1="631.0" x2="631.0" y1="234.0" y2="267.7" stroke="#d0d0d0" stroke-width="1.2"/><rect x="625.1" y="254.0" width="11.8" height="9.5" fill="#ff0a0a" stroke="#ffc8c8" stroke-width="1"/><line x1="644.4" x2="644.4" y1="233.2" y2="265.2" stroke="#d0d0d0" stroke-width="1.2"/><rect x="638.5" y="241.0" width="11.8" height="12.2" fill="#ff0a0a" stroke="#ffc8c8" stroke-width="1"/><line x1="657.8" x2="657.8" y1="227.6" y2="247.7" stroke="#d0d0d0" stroke-width="1.2"/><rect x="651.9" y="240.2" width="11.8" height="6.2" fill="#0a0aff" stroke="#b4b4ff" stroke-width="1"/><line x1="671.2" x2="671.2" y1="202.6" y2="250.2" stroke="#d0d0d0" stroke-width="1.2"/><rect x="665.3" y="223.9" width="11.8" height="22.5" fill="#ff0a0a" stroke="#ffc8c8" stroke-width="1"/><line x1="684.6" x2="684.6" y1="216.4" y2="245.2" stroke="#d0d0d0" stroke-width="1.2"/><line x1="678.6" x2="690.6" y1="224.2" y2="224.2" stroke="#f4d8d8" stroke-width="1.8"/><line x1="698.1" x2="698.1" y1="168.8" y2="232.7" stroke="#d0d0d0" stroke-width="1.2"/><rect x="692.2" y="199.6" width="11.8" height="23.8" fill="#ff0a0a" stroke="#ffc8c8" stroke-width="1"/><line x1="711.5" x2="711.5" y1="195.6" y2="221.4" stroke="#d0d0d0" stroke-width="1.2"/><rect x="705.6" y="199.6" width="11.8" height="15.5" fill="#0a0aff" stroke="#b4b4ff" stroke-width="1"/><line x1="724.9" x2="724.9" y1="204.6" y2="235.2" stroke="#d0d0d0" stroke-width="1.2"/><rect x="719.0" y="214.6" width="11.8" height="18.1" fill="#0a0aff" stroke="#b4b4ff" stroke-width="1"/><line x1="738.3" x2="738.3" y1="229.6" y2="258.2" stroke="#d0d0d0" stroke-width="1.2"/><rect x="732.4" y="233.2" width="11.8" height="24.0" fill="#0a0aff" stroke="#b4b4ff" stroke-width="1"/><line x1="751.7" x2="751.7" y1="237.7" y2="260.2" stroke="#d0d0d0" stroke-width="1.2"/><rect x="745.8" y="252.2" width="11.8" height="5.5" fill="#ff0a0a" stroke="#ffc8c8" stroke-width="1"/><line x1="765.1" x2="765.1" y1="244.0" y2="254.0" stroke="#d0d0d0" stroke-width="1.2"/><line x1="759.1" x2="771.1" y1="251.4" y2="251.4" stroke="#f4d8d8" stroke-width="1.8"/><line x1="778.6" x2="778.6" y1="247.7" y2="255.2" stroke="#d0d0d0" stroke-width="1.2"/><rect x="772.7" y="251.0" width="11.8" height="2.4" fill="#0a0aff" stroke="#b4b4ff" stroke-width="1"/><line x1="792.0" x2="792.0" y1="250.2" y2="255.2" stroke="#d0d0d0" stroke-width="1.2"/><rect x="786.1" y="251.4" width="11.8" height="3.0" fill="#ff0a0a" stroke="#ffc8c8" stroke-width="1"/><line x1="805.4" x2="805.4" y1="250.2" y2="272.7" stroke="#d0d0d0" stroke-width="1.2"/><rect x="799.5" y="251.4" width="11.8" height="11.8" fill="#0a0aff" stroke="#b4b4ff" stroke-width="1"/><line x1="818.8" x2="818.8" y1="261.4" y2="268.2" stroke="#d0d0d0" stroke-width="1.2"/><rect x="812.9" y="263.5" width="11.8" height="3.0" fill="#0a0aff" stroke="#b4b4ff" stroke-width="1"/><line x1="832.2" x2="832.2" y1="264.0" y2="280.2" stroke="#d0d0d0" stroke-width="1.2"/><rect x="826.3" y="264.5" width="11.8" height="2.5" fill="#ff0a0a" stroke="#ffc8c8" stroke-width="1"/><line x1="845.6" x2="845.6" y1="259.0" y2="276.5" stroke="#d0d0d0" stroke-width="1.2"/><rect x="839.7" y="264.7" width="11.8" height="6.0" fill="#0a0aff" stroke="#b4b4ff" stroke-width="1"/><line x1="859.0" x2="859.0" y1="270.0" y2="279.0" stroke="#d0d0d0" stroke-width="1.2"/><rect x="853.1" y="271.4" width="11.8" height="6.3" fill="#0a0aff" stroke="#b4b4ff" stroke-width="1"/><line x1="872.5" x2="872.5" y1="275.2" y2="293.2" stroke="#d0d0d0" stroke-width="1.2"/><line x1="866.5" x2="878.5" y1="277.7" y2="277.7" stroke="#f4d8d8" stroke-width="1.8"/><line x1="885.9" x2="885.9" y1="274.0" y2="287.7" stroke="#d0d0d0" stroke-width="1.2"/><rect x="880.0" y="278.4" width="11.8" height="6.1" fill="#0a0aff" stroke="#b4b4ff" stroke-width="1"/><line x1="899.3" x2="899.3" y1="284.0" y2="307.7" stroke="#d0d0d0" stroke-width="1.2"/><rect x="893.4" y="285.2" width="11.8" height="8.3" fill="#0a0aff" stroke="#b4b4ff" stroke-width="1"/><line x1="912.7" x2="912.7" y1="260.2" y2="320.5" stroke="#d0d0d0" stroke-width="1.2"/><rect x="906.8" y="263.9" width="11.8" height="29.6" fill="#ff0a0a" stroke="#ffc8c8" stroke-width="1"/><line x1="926.1" x2="926.1" y1="232.6" y2="264.0" stroke="#d0d0d0" stroke-width="1.2"/><rect x="920.2" y="254.7" width="11.8" height="7.5" fill="#ff0a0a" stroke="#ffc8c8" stroke-width="1"/><line x1="939.5" x2="939.5" y1="221.2" y2="254.5" stroke="#d0d0d0" stroke-width="1.2"/><rect x="933.6" y="238.4" width="11.8" height="15.5" fill="#ff0a0a" stroke="#ffc8c8" stroke-width="1"/><line x1="953.0" x2="953.0" y1="232.6" y2="277.7" stroke="#d0d0d0" stroke-width="1.2"/><rect x="947.1" y="238.4" width="11.8" height="34.8" fill="#0a0aff" stroke="#b4b4ff" stroke-width="1"/><line x1="966.4" x2="966.4" y1="250.2" y2="284.0" stroke="#d0d0d0" stroke-width="1.2"/><rect x="960.5" y="273.2" width="11.8" height="2.8" fill="#0a0aff" stroke="#b4b4ff" stroke-width="1"/><line x1="979.8" x2="979.8" y1="255.2" y2="301.5" stroke="#d0d0d0" stroke-width="1.2"/><rect x="973.9" y="277.0" width="11.8" height="8.2" fill="#0a0aff" stroke="#b4b4ff" stroke-width="1"/><line x1="993.2" x2="993.2" y1="269.0" y2="294.0" stroke="#d0d0d0" stroke-width="1.2"/><line x1="987.2" x2="999.2" y1="285.1" y2="285.1" stroke="#f4d8d8" stroke-width="1.8"/><line x1="1006.6" x2="1006.6" y1="242.6" y2="301.5" stroke="#d0d0d0" stroke-width="1.2"/><rect x="1000.7" y="279.7" width="11.8" height="4.8" fill="#ff0a0a" stroke="#ffc8c8" stroke-width="1"/><line x1="1020.0" x2="1020.0" y1="252.7" y2="282.7" stroke="#d0d0d0" stroke-width="1.2"/><rect x="1014.1" y="271.0" width="11.8" height="9.2" fill="#ff0a0a" stroke="#ffc8c8" stroke-width="1"/><line x1="1033.5" x2="1033.5" y1="262.7" y2="277.7" stroke="#d0d0d0" stroke-width="1.2"/><rect x="1027.6" y="267.2" width="11.8" height="2.5" fill="#0a0aff" stroke="#b4b4ff" stroke-width="1"/><line x1="1046.9" x2="1046.9" y1="267.7" y2="282.7" stroke="#d0d0d0" stroke-width="1.2"/><rect x="1041.0" y="271.0" width="11.8" height="5.0" fill="#0a0aff" stroke="#b4b4ff" stroke-width="1"/><line x1="1060.3" x2="1060.3" y1="266.4" y2="287.4" stroke="#d0d0d0" stroke-width="1.2"/><rect x="1054.4" y="276.3" width="11.8" height="8.5" fill="#0a0aff" stroke="#b4b4ff" stroke-width="1"/><line x1="1073.7" x2="1073.7" y1="276.5" y2="287.2" stroke="#d0d0d0" stroke-width="1.2"/><rect x="1067.8" y="277.7" width="11.8" height="6.8" fill="#ff0a0a" stroke="#ffc8c8" stroke-width="1"/><line x1="1087.1" x2="1087.1" y1="274.0" y2="286.5" stroke="#d0d0d0" stroke-width="1.2"/><line x1="1081.1" x2="1093.1" y1="276.4" y2="276.4" stroke="#f4d8d8" stroke-width="1.8"/><line x1="1100.5" x2="1100.5" y1="264.0" y2="280.2" stroke="#d0d0d0" stroke-width="1.2"/><rect x="1094.6" y="267.2" width="11.8" height="3.8" fill="#ff0a0a" stroke="#ffc8c8" stroke-width="1"/><line x1="1114.0" x2="1114.0" y1="248.4" y2="269.0" stroke="#d0d0d0" stroke-width="1.2"/><rect x="1108.1" y="249.4" width="11.8" height="17.8" fill="#ff0a0a" stroke="#ffc8c8" stroke-width="1"/><line x1="1127.4" x2="1127.4" y1="242.6" y2="255.2" stroke="#d0d0d0" stroke-width="1.2"/><rect x="1121.5" y="244.6" width="11.8" height="4.3" fill="#ff0a0a" stroke="#ffc8c8" stroke-width="1"/><line x1="1140.8" x2="1140.8" y1="243.1" y2="260.2" stroke="#d0d0d0" stroke-width="1.2"/><rect x="1134.9" y="244.4" width="11.8" height="13.3" fill="#0a0aff" stroke="#b4b4ff" stroke-width="1"/><line x1="1154.2" x2="1154.2" y1="245.1" y2="264.0" stroke="#d0d0d0" stroke-width="1.2"/><rect x="1148.3" y="258.2" width="11.8" height="4.5" fill="#0a0aff" stroke="#b4b4ff" stroke-width="1"/><line x1="1167.6" x2="1167.6" y1="236.4" y2="262.7" stroke="#d0d0d0" stroke-width="1.2"/><rect x="1161.7" y="238.1" width="11.8" height="23.3" fill="#ff0a0a" stroke="#ffc8c8" stroke-width="1"/><line x1="1181.0" x2="1181.0" y1="236.2" y2="240.7" stroke="#d0d0d0" stroke-width="1.2"/><rect x="1175.1" y="237.1" width="11.8" height="2.3" fill="#0a0aff" stroke="#b4b4ff" stroke-width="1"/><line x1="1194.4" x2="1194.4" y1="228.9" y2="247.6" stroke="#d0d0d0" stroke-width="1.2"/><rect x="1188.5" y="230.6" width="11.8" height="8.8" fill="#ff0a0a" stroke="#ffc8c8" stroke-width="1"/><line x1="1207.9" x2="1207.9" y1="229.6" y2="246.4" stroke="#d0d0d0" stroke-width="1.2"/><rect x="1202.0" y="230.6" width="11.8" height="14.5" fill="#0a0aff" stroke="#b4b4ff" stroke-width="1"/><line x1="1221.3" x2="1221.3" y1="201.0" y2="249.2" stroke="#d0d0d0" stroke-width="1.2"/><rect x="1215.4" y="205.0" width="11.8" height="40.0" fill="#ff0a0a" stroke="#ffc8c8" stroke-width="1"/><line x1="1234.7" x2="1234.7" y1="191.0" y2="224.3" stroke="#d0d0d0" stroke-width="1.2"/><line x1="1228.7" x2="1240.7" y1="204.2" y2="204.2" stroke="#f4d8d8" stroke-width="1.8"/><line x1="1248.1" x2="1248.1" y1="184.5" y2="239.2" stroke="#d0d0d0" stroke-width="1.2"/><rect x="1242.2" y="205.0" width="11.8" height="21.0" fill="#0a0aff" stroke="#b4b4ff" stroke-width="1"/><line x1="1261.5" x2="1261.5" y1="216.0" y2="228.6" stroke="#d0d0d0" stroke-width="1.2"/><rect x="1255.6" y="218.7" width="11.8" height="8.9" fill="#ff0a0a" stroke="#ffc8c8" stroke-width="1"/></g>
<polygon points="5.0,332.0 60.0,326.0 120.0,318.0 147.5,316.8 173.8,315.7 188.8,315.0 201.3,300.0 215.0,293.8 227.6,272.5 282.7,272.0 295.2,269.5 310.3,265.0 324.0,257.5 337.8,254.5 355.3,255.5 365.3,258.8 376.6,266.3 382.9,272.5 389.0,281.3 403.0,287.6 415.4,286.3 429.2,283.0 443.0,286.3 456.7,290.0 470.5,291.3 483.4,291.3 484.3,294.4 496.8,337.0 510.2,338.5 523.8,340.6 537.0,346.4 563.8,353.1 577.4,353.9 590.6,356.4 604.2,346.4 612.7,339.6 631.0,332.6 644.5,332.6 657.7,329.6 671.3,325.6 684.5,325.6 698.0,320.1 712.8,313.8 724.8,305.1 735.4,300.1 805.5,299.3 818.7,305.1 832.2,311.3 845.5,313.8 860.0,312.7 885.8,306.5 899.3,302.7 926.1,295.2 939.6,290.2 952.9,277.7 966.4,272.7 979.7,270.2 993.2,265.7 1006.5,259.4 1020.0,257.7 1033.5,244.6 1046.8,236.4 1060.3,233.9 1073.6,232.1 1087.1,230.9 1100.4,228.9 1113.9,228.1 1127.4,228.9 1140.7,232.6 1154.2,237.6 1167.5,243.1 1181.0,248.1 1194.3,252.7 1207.8,255.2 1220.0,257.3 1225.0,258.2 1233.0,260.7 1247.0,265.0 1261.3,259.6 1261.4,259.6 1272.8,257.3 1274.9,257.3 1288.3,257.3 1301.7,257.3 1315.1,257.3 1341.0,257.3 1341.0,245.4 1315.1,245.4 1301.7,254.5 1288.3,274.0 1274.9,286.5 1272.8,288.3 1261.4,298.3 1261.3,298.3 1247.0,300.3 1233.0,302.3 1225.0,303.3 1220.0,304.0 1207.8,304.2 1194.3,304.5 1181.0,304.7 1167.5,305.7 1154.2,305.7 1140.7,305.7 1127.4,305.7 1113.9,305.7 1100.4,305.7 1087.1,305.7 1073.6,305.7 1060.3,305.7 1046.8,305.7 1033.5,305.7 1020.0,321.0 1006.5,312.8 993.2,312.8 979.7,312.8 966.4,312.8 952.9,312.8 939.6,312.8 926.1,312.8 899.3,312.8 885.8,312.8 860.0,312.8 845.5,312.8 832.2,312.8 818.7,312.8 805.5,312.8 735.4,312.8 724.8,312.8 712.8,312.8 698.0,312.8 684.5,312.8 671.3,312.8 657.7,312.8 644.5,312.8 631.0,312.8 612.7,312.8 604.2,312.8 590.6,312.8 577.4,312.8 563.8,312.8 537.0,312.8 523.8,312.8 510.2,312.8 496.8,312.8 484.3,291.3 483.4,291.3 470.5,291.3 456.7,291.3 443.0,291.3 429.2,291.3 415.4,291.3 403.0,291.3 389.0,291.3 382.9,291.3 376.6,291.3 365.3,291.3 355.3,291.3 337.8,291.3 324.0,291.3 310.3,300.0 295.2,303.1 282.7,305.6 227.6,305.6 215.0,316.4 201.3,316.4 188.8,316.4 173.8,316.4 147.5,291.0 120.0,285.0 60.0,280.0 5.0,277.0" fill="#c2c2c2" fill-opacity="0.5" fill-rule="nonzero"/>
<g font-size="10.5" fill="#505050" text-anchor="middle" letter-spacing=".5" font-family="DejaVu Sans,Liberation Sans,sans-serif"><g fill="#cfcfcf" fill-opacity=".9"><rect x="324.2" y="189.6" width="76.5" height="20" rx="4.5"/><path d="M357.4 209.3L362.4 216.6L367.4 209.3z"/></g><text x="362.4" y="198.3">1.29383</text><text x="362.4" y="208.4">10/01 23:00</text><g fill="#cfcfcf" fill-opacity=".9"><rect x="660.2" y="140.2" width="76.5" height="20" rx="4.5"/><path d="M693.0 159.9L698.0 167.2L703.0 159.9z"/></g><text x="698.5" y="148.9">1.29678</text><text x="698.5" y="159.0">10/03 00:00</text><g fill="#cfcfcf" fill-opacity=".9"><rect x="901.3" y="192.6" width="76.5" height="20" rx="4.5"/><path d="M934.6 212.3L939.6 219.6L944.6 212.3z"/></g><text x="939.5" y="201.3">1.29368</text><text x="939.5" y="211.4">10/03 18:00</text><g fill="#cfcfcf" fill-opacity=".9"><rect x="1209.3" y="157.7" width="76.5" height="20" rx="4.5"/><path d="M1243.0 177.4L1248.0 184.7L1253.0 177.4z"/></g><text x="1247.5" y="166.4">1.29575</text><text x="1247.5" y="176.5">10/04 17:00</text><g fill="#cfcfcf" fill-opacity=".9"><rect x="874.5" y="326.2" width="76.5" height="20" rx="4.5"/><path d="M907.6 326.5L912.6 320.7L917.6 326.5z"/></g><text x="912.8" y="334.9">1.28773</text><text x="912.8" y="345.0">10/03 16:00</text><g fill="#cfcfcf" fill-opacity=".9"><rect x="552.2" y="321.2" width="76.5" height="20" rx="4.5"/><path d="M585.6 321.5L590.6 315.7L595.6 321.5z"/></g><text x="590.5" y="329.9">1.28801</text><text x="590.5" y="340.0">10/02 16:00</text><g fill="#cfcfcf" fill-opacity=".9"><rect x="123.3" y="448.6" width="76.5" height="20" rx="4.5"/><path d="M156.4 448.9L161.4 443.1L166.4 448.9z"/></g><text x="161.6" y="457.3">1.28037</text><text x="161.6" y="467.4">10/01 08:00</text><rect x="9" y="187.5" width="76.5" height="20" rx="4.5" fill="#cfcfcf" fill-opacity=".9"/></g>
<polyline points="5.0,332.0 60.0,326.0 120.0,318.0 188.8,315.0 201.3,300.0 215.0,293.8 227.6,272.5 282.7,272.0 295.2,269.5 310.3,265.0 324.0,257.5 337.8,254.5 355.3,255.5 365.3,258.8 376.6,266.3 382.9,272.5 389.0,281.3 403.0,287.6 415.4,286.3 429.2,283.0 443.0,286.3 456.7,290.0 470.5,291.3 483.4,291.3 496.8,337.0 510.2,338.5 523.8,340.6 537.0,346.4 563.8,353.1 577.4,353.9 590.6,356.4 604.2,346.4 612.7,339.6 631.0,332.6 644.5,332.6 657.7,329.6 671.3,325.6 684.5,325.6 698.0,320.1 712.8,313.8 724.8,305.1 735.4,300.1 805.5,299.3 818.7,305.1 832.2,311.3 845.5,313.8 860.0,312.7 885.8,306.5 899.3,302.7 926.1,295.2 939.6,290.2 952.9,277.7 966.4,272.7 979.7,270.2 993.2,265.7 1006.5,259.4 1020.0,257.7 1033.5,244.6 1046.8,236.4 1060.3,233.9 1073.6,232.1 1087.1,230.9 1100.4,228.9 1113.9,228.1 1127.4,228.9 1140.7,232.6 1154.2,237.6 1167.5,243.1 1181.0,248.1 1194.3,252.7 1207.8,255.2 1225.0,258.2 1247.0,265.0 1261.3,259.6 1272.8,257.3 1341.0,257.3" fill="none" stroke="#9494e6" stroke-width="1.4" stroke-linejoin="round" stroke-linecap="round" />
<polyline points="5.0,277.0 60.0,280.0 120.0,285.0 147.5,291.0 173.8,316.4 215.0,316.4 227.6,305.6 282.7,305.6 310.3,300.0 324.0,291.3 484.3,291.3 496.8,312.8 1006.5,312.8 1020.0,321.0 1033.5,305.7 1167.5,305.7 1181.0,304.7 1220.0,304.0 1233.0,302.3 1261.4,298.3 1274.9,286.5 1288.3,274.0 1301.7,254.5 1315.1,245.4 1341.0,245.4" fill="none" stroke="#3cd458" stroke-width="1.3" stroke-linejoin="round" stroke-linecap="round" />
<polyline points="14.0,232.0 60.0,232.0 75.0,250.0 120.0,270.0 147.5,287.6 153.8,300.0 161.3,312.6 324.0,312.6 335.3,320.0 350.3,328.5 483.0,329.0 483.4,329.4 496.8,329.4 510.2,328.6 523.6,328.6 537.1,328.6 550.5,324.6 563.9,318.9 577.3,317.9 590.7,311.4 604.1,300.2 617.6,279.5 631.0,269.1 644.4,269.1 657.8,269.1 671.2,261.6 684.6,261.6 698.1,244.7 711.5,244.7 724.9,244.7 738.3,244.7 751.7,244.7 765.1,244.7 778.6,241.4 792.0,241.4 805.4,241.4 818.8,241.4 832.2,241.4 845.6,241.4 859.0,241.4 872.5,241.4 885.9,241.4 899.3,241.4 912.7,244.7 926.1,244.7 939.5,244.7 953.0,244.7 966.4,244.7 979.8,244.7 993.2,244.7 1006.6,244.7 1020.0,244.7 1033.5,244.7 1046.9,258.1 1060.3,262.6 1073.7,270.9 1087.1,270.9 1100.5,270.9 1114.0,270.9 1127.4,270.9 1140.8,270.9 1154.2,270.9 1167.6,270.9 1181.0,270.9 1194.4,270.9 1207.9,270.9 1221.3,260.8 1234.7,255.8 1248.1,252.5 1261.5,243.0" fill="none" stroke="#f0c448" stroke-width="1.2" stroke-linejoin="round" stroke-linecap="round" />
<polyline points="14.0,238.0 40.0,250.0 68.0,262.0 95.0,290.0 121.0,305.0 147.5,322.6 158.8,355.0 170.0,367.7 187.6,369.0 201.3,380.0 215.0,390.0 229.0,395.7 242.7,395.7 255.3,401.2 268.7,380.3 282.2,362.2 295.6,351.6 309.0,351.6 322.4,347.6 335.8,330.8 349.2,328.5 362.7,311.4 376.1,300.2 389.5,279.5 402.9,268.9 416.3,268.9 429.7,269.1 443.2,269.1 456.6,269.1 470.0,269.1 483.4,283.0 496.8,295.3 510.2,299.1 523.6,296.6 537.1,296.6 550.5,290.2 563.9,280.9 577.3,280.9 590.7,283.4 604.1,282.1 617.6,282.1 631.0,274.0 644.4,273.6 657.8,270.8 671.2,258.3 684.6,258.3 698.1,241.4 711.5,229.5 724.9,222.0 738.3,218.2 751.7,217.0 765.1,214.5 778.6,214.5 792.0,214.5 805.4,220.8 818.8,234.1 832.2,242.4 845.6,254.9 859.0,258.9 872.5,268.6 885.9,270.4 899.3,278.9 912.7,285.4 926.1,276.6 939.5,270.9 953.0,270.9 966.4,270.9 979.8,270.9 993.2,270.9 1006.6,270.9 1020.0,270.9 1033.5,261.4 1046.9,261.4 1060.3,267.1 1073.7,272.1 1087.1,272.1 1100.5,272.1 1114.0,272.1 1127.4,265.0 1140.8,265.0 1154.2,265.0 1167.6,261.9 1181.0,261.7 1194.4,257.7 1207.9,254.6 1221.3,235.0 1234.7,227.5 1248.1,224.2 1261.5,224.2" fill="none" stroke="#e01818" stroke-width="1.2" stroke-linejoin="round" stroke-linecap="round" stroke-opacity=".85"/>
<polyline points="13.8,268.8 27.3,272.0 40.7,283.0 54.1,287.0 67.5,287.0 80.9,304.3 94.3,301.3 107.8,301.7 121.2,304.3 134.6,298.0 148.0,301.8 161.4,293.8 174.8,281.5 188.2,281.8 201.7,291.5 215.1,279.7 228.5,261.4 241.9,298.3 255.3,287.7 268.7,260.2 282.2,263.5 295.6,254.0 309.0,241.0 322.4,246.4 335.8,223.9 349.2,224.2 362.7,199.6 376.1,215.1 389.5,232.7 402.9,257.2 416.3,252.2 429.7,251.4 443.2,253.4 456.6,251.4 470.0,263.2 483.4,266.5 496.8,264.5 510.2,270.7 523.6,277.7 537.1,277.7 550.5,284.5 563.9,293.5 577.3,263.9 590.7,254.7 604.1,238.4 617.6,273.2 631.0,276.0 644.4,285.2 657.8,285.1 671.2,279.7 684.6,271.0 698.1,269.7 711.5,276.0 724.9,284.8 738.3,277.7 751.7,276.4 765.1,267.2 778.6,249.4 792.0,244.6 805.4,257.7 818.8,262.7 832.2,238.1 845.6,239.4 859.0,230.6 872.5,245.1 885.9,205.0 899.3,204.2 912.7,226.0 926.1,218.7" fill="none" stroke="#58b030" stroke-width="1.2" stroke-linejoin="round" stroke-linecap="round" />
<polyline points="13.8,231.0 27.3,231.5 40.7,232.0 54.1,235.0 67.5,239.8 80.9,246.0 94.3,253.1 107.8,260.4 121.2,267.1 134.6,273.3 148.0,280.9 161.4,293.5 174.8,302.7 188.2,311.7 201.7,320.9 215.1,328.9 228.5,338.1 241.9,347.3 255.3,356.5 268.7,360.0 282.2,363.1 295.6,365.9 309.0,365.6 322.4,363.8 335.8,358.6 349.2,356.2 362.7,352.6 376.1,348.6 389.5,344.5 402.9,341.5 416.3,337.1 429.7,329.5 443.2,324.7 456.6,319.0 470.0,311.7 483.4,305.7 496.8,300.7 510.2,293.8 523.6,289.6 537.1,288.5 550.5,286.8 563.9,286.2 577.3,286.6 590.7,285.4 604.1,286.7 617.6,286.7 631.0,285.2 644.4,283.9 657.8,280.7 671.2,278.3 684.6,274.4 698.1,269.1 711.5,264.4 724.9,261.5 738.3,259.2 751.7,256.5 765.1,254.6 778.6,253.0 792.0,251.6 805.4,250.1 818.8,249.4 832.2,248.9 845.6,248.5 859.0,247.7 872.5,248.9 885.9,250.6 899.3,251.9 912.7,253.2 926.1,253.5 939.5,254.5 953.0,257.1 966.4,261.0 979.8,263.9 993.2,266.5 1006.6,267.3 1020.0,268.3 1033.5,269.9 1046.9,271.7 1060.3,272.6 1073.7,272.9 1087.1,273.1 1100.5,273.3 1114.0,272.0 1127.4,271.5 1140.8,270.2 1154.2,267.6 1167.6,264.9 1181.0,263.9 1194.4,263.1 1207.9,263.4 1221.3,261.1 1234.7,256.8 1248.1,253.6 1261.5,249.7" fill="none" stroke="#3c3c3c" stroke-width="2.1" stroke-linejoin="round" stroke-linecap="round" />
<polyline points="13.8,209.0 27.3,207.6 40.7,205.4 54.1,205.0 67.5,206.0 80.9,207.3 94.3,209.6 107.8,211.3 121.2,212.7 134.6,214.6 148.0,218.2 161.4,225.0 174.8,230.3 188.2,237.0 201.7,244.8 215.1,252.6 228.5,263.6 241.9,277.7 255.3,294.5 268.7,303.2 282.2,311.8 295.6,319.9 309.0,319.0 322.4,315.3 335.8,303.9 349.2,298.4 362.7,292.0 376.1,286.4 389.5,280.9 402.9,276.7 416.3,273.1 429.7,269.1 443.2,267.2 456.6,265.6 470.0,264.0 483.4,264.5 496.8,266.7 510.2,268.5 523.6,271.4 537.1,273.4 550.5,271.3 563.9,270.0 577.3,270.5 590.7,270.5 604.1,273.6 617.6,272.8 631.0,269.7 644.4,266.0 657.8,260.5 671.2,254.7 684.6,248.3 698.1,239.0 711.5,233.2 724.9,231.0 738.3,229.7 751.7,228.7 765.1,227.9 778.6,227.2 792.0,226.9 805.4,226.7 818.8,226.7 832.2,226.2 845.6,228.0 859.0,228.0 872.5,228.0 885.9,228.1 899.3,228.1 912.7,229.4 926.1,229.8 939.5,231.6 953.0,235.2 966.4,242.6 979.8,248.5 993.2,252.3 1006.6,253.2 1020.0,254.7 1033.5,257.1 1046.9,259.3 1060.3,260.5 1073.7,261.0 1087.1,261.2 1100.5,261.4 1114.0,258.9 1127.4,257.3 1140.8,255.6 1154.2,253.5 1167.6,250.2 1181.0,248.0 1194.4,246.1 1207.9,246.3 1221.3,240.5 1234.7,232.7 1248.1,229.5 1261.5,225.4" fill="none" stroke="#f0a0a0" stroke-width="1.3" stroke-linejoin="round" stroke-linecap="round" />
<polyline points="13.8,253.0 27.3,255.4 40.7,258.6 54.1,265.1 67.5,273.7 80.9,284.6 94.3,296.7 107.8,309.4 121.2,321.5 134.6,332.0 148.0,343.5 161.4,362.1 174.8,375.1 188.2,386.4 201.7,397.0 215.1,405.2 228.5,412.7 241.9,416.8 255.3,418.5 268.7,416.8 282.2,414.4 295.6,411.9 309.0,412.1 322.4,412.2 335.8,413.4 349.2,413.9 362.7,413.3 376.1,410.8 389.5,408.1 402.9,406.3 416.3,401.0 429.7,390.0 443.2,382.3 456.6,372.4 470.0,359.4 483.4,346.8 496.8,334.7 510.2,319.1 523.6,307.8 537.1,303.7 550.5,302.3 563.9,302.3 577.3,302.8 590.7,300.3 604.1,299.9 617.6,300.5 631.0,300.6 644.4,301.8 657.8,301.0 671.2,301.8 684.6,300.5 698.1,299.2 711.5,295.6 724.9,292.0 738.3,288.7 751.7,284.4 765.1,281.3 778.6,278.7 792.0,276.3 805.4,273.4 818.8,272.2 832.2,271.7 845.6,269.1 859.0,267.4 872.5,269.8 885.9,273.0 899.3,275.7 912.7,276.9 926.1,277.2 939.5,277.5 953.0,279.0 966.4,279.5 979.8,279.3 993.2,280.6 1006.6,281.4 1020.0,281.9 1033.5,282.8 1046.9,284.0 1060.3,284.7 1073.7,284.9 1087.1,284.9 1100.5,285.2 1114.0,285.2 1127.4,285.6 1140.8,284.8 1154.2,281.8 1167.6,279.6 1181.0,279.8 1194.4,280.0 1207.9,280.5 1221.3,281.7 1234.7,280.8 1248.1,277.7 1261.5,273.9" fill="none" stroke="#6cc0c4" stroke-width="1.3" stroke-linejoin="round" stroke-linecap="round" />
<polyline points="13.8,275.0 27.3,279.3 40.7,285.2 54.1,295.1 67.5,307.5 80.9,323.2 94.3,340.3 107.8,358.5 121.2,375.9 134.6,390.7 148.0,406.1 161.4,430.6 174.8,447.5 188.2,461.1 201.7,473.1 215.1,481.5 228.5,487.3 241.9,486.4 255.3,480.6 268.7,473.6 282.2,465.7 295.6,457.9 309.0,458.7 322.4,460.7 335.8,468.2 349.2,471.7 362.7,473.9 376.1,473.0 389.5,471.6 402.9,471.2 416.3,465.0 429.7,450.4 443.2,439.8 456.6,425.7 470.0,407.1 483.4,388.0 496.8,368.8 510.2,344.4 523.6,326.0 537.1,318.8 550.5,317.9 563.9,318.5 577.3,318.9 590.7,315.2 604.1,313.1 617.6,314.3 631.0,316.0 644.4,319.7 657.8,321.2 671.2,325.3 684.6,326.6 698.1,329.3 711.5,326.9 724.9,322.6 738.3,318.2 751.7,312.2 765.1,308.0 778.6,304.4 792.0,300.9 805.4,296.8 818.8,294.9 832.2,294.4 845.6,289.6 859.0,287.1 872.5,290.6 885.9,295.4 899.3,299.5 912.7,300.7 926.1,300.8 939.5,300.4 953.0,300.9 966.4,298.0 979.8,294.8 993.2,294.8 1006.6,295.4 1020.0,295.4 1033.5,295.6 1046.9,296.4 1060.3,296.9 1073.7,296.8 1087.1,296.7 1100.5,297.1 1114.0,298.4 1127.4,299.8 1140.8,299.4 1154.2,296.0 1167.6,294.3 1181.0,295.6 1194.4,297.0 1207.9,297.6 1221.3,302.2 1234.7,304.9 1248.1,301.8 1261.5,298.2" fill="none" stroke="#52a4d8" stroke-width="2.1" stroke-linejoin="round" stroke-linecap="round" />
<polyline points="13.8,297.0 27.3,303.2 40.7,311.8 54.1,325.1 67.5,341.4 80.9,361.9 94.3,383.9 107.8,407.6 121.2,430.2 134.6,449.4 148.0,468.7 161.4,499.1 174.8,519.9 188.2,535.9 201.7,549.2 215.1,557.7 228.5,561.8 241.9,556.0 255.3,542.6 268.7,530.4 282.2,516.9 295.6,503.9 309.0,505.2 322.4,509.2 335.8,523.0 349.2,529.5 362.7,534.6 376.1,535.2 389.5,535.2 402.9,536.0 416.3,528.9 429.7,510.9 443.2,497.4 456.6,479.1 470.0,454.7 483.4,429.2 496.8,402.8 510.2,369.8 523.6,344.2 537.1,333.9 550.5,333.4 563.9,334.6 577.3,335.1 590.7,330.1 604.1,326.3 617.6,328.1 631.0,331.4 644.4,337.6 657.8,341.5 671.2,348.9 684.6,352.7 698.1,359.4 711.5,358.1 724.9,353.1 738.3,347.6 751.7,340.1 765.1,334.6 778.6,330.1 792.0,325.6 805.4,320.1 818.8,317.6 832.2,317.1 845.6,310.1 859.0,306.7 872.5,311.5 885.9,317.8 899.3,323.3 912.7,324.5 926.1,324.5 939.5,323.3 953.0,322.8 966.4,316.5 979.8,310.2 993.2,309.0 1006.6,309.5 1020.0,309.0 1033.5,308.5 1046.9,308.7 1060.3,309.0 1073.7,308.7 1087.1,308.5 1100.5,309.0 1114.0,311.5 1127.4,314.0 1140.8,314.0 1154.2,310.2 1167.6,309.0 1181.0,311.5 1194.4,314.0 1207.9,314.7 1221.3,322.8 1234.7,329.0 1248.1,326.0 1261.5,322.5" fill="none" stroke="#1414cc" stroke-width="2.8" stroke-linejoin="round" stroke-linecap="round" />
<polyline points="13.8,187.0 27.3,183.7 40.7,178.8 54.1,175.0 67.5,172.1 80.9,168.7 94.3,166.0 107.8,162.2 121.2,158.3 134.6,155.9 148.0,155.6 161.4,156.5 174.8,157.9 188.2,162.2 201.7,168.7 215.1,176.4 228.5,189.0 241.9,208.1 255.3,232.5 268.7,246.4 282.2,260.5 295.6,273.9 309.0,272.5 322.4,266.8 335.8,249.1 349.2,240.6 362.7,231.3 376.1,224.2 389.5,217.3 402.9,211.9 416.3,209.2 429.7,208.7 443.2,209.6 456.6,212.3 470.0,216.3 483.4,223.3 496.8,232.7 510.2,243.2 523.6,253.2 537.1,258.3 550.5,255.8 563.9,253.9 577.3,254.3 590.7,255.6 604.1,260.4 617.6,259.0 631.0,254.3 644.4,248.1 657.8,240.2 671.2,231.2 684.6,222.2 698.1,208.9 711.5,201.9 724.9,200.5 738.3,200.3 751.7,200.9 765.1,201.3 778.6,201.5 792.0,202.3 805.4,203.3 818.8,204.0 832.2,203.5 845.6,207.5 859.0,208.4 872.5,207.2 885.9,205.7 899.3,204.3 912.7,205.6 926.1,206.2 939.5,208.7 953.0,213.3 966.4,224.1 979.8,233.1 993.2,238.1 1006.6,239.2 1020.0,241.2 1033.5,244.2 1046.9,247.0 1060.3,248.3 1073.7,249.0 1087.1,249.4 1100.5,249.5 1114.0,245.7 1127.4,243.1 1140.8,241.0 1154.2,239.3 1167.6,235.6 1181.0,232.2 1194.4,229.1 1207.9,229.2 1221.3,220.0 1234.7,208.6 1248.1,205.3 1261.5,201.1" fill="none" stroke="#c84cb2" stroke-width="2.1" stroke-linejoin="round" stroke-linecap="round" />
<polyline points="13.8,165.0 27.3,159.9 40.7,152.2 54.1,145.0 67.5,138.2 80.9,130.0 94.3,122.4 107.8,113.2 121.2,103.9 134.6,97.2 148.0,93.0 161.4,88.0 174.8,85.5 188.2,87.5 201.7,92.5 215.1,100.1 228.5,114.5 241.9,138.6 255.3,170.5 268.7,189.6 282.2,209.2 295.6,227.9 309.0,225.9 322.4,218.4 335.8,194.3 349.2,182.9 362.7,170.7 376.1,161.9 389.5,153.8 402.9,147.0 416.3,145.2 429.7,148.2 443.2,152.1 456.6,158.9 470.0,168.6 483.4,182.1 496.8,198.6 510.2,217.9 523.6,235.0 537.1,243.2 550.5,240.2 563.9,237.7 577.3,238.2 590.7,240.8 604.1,247.2 617.6,245.2 631.0,238.9 644.4,230.3 657.8,220.0 671.2,207.7 684.6,196.1 698.1,178.8 711.5,170.7 724.9,170.0 738.3,170.8 751.7,173.0 765.1,174.6 778.6,175.8 792.0,177.6 805.4,180.0 818.8,181.3 832.2,180.8 845.6,187.0 859.0,188.7 872.5,186.3 885.9,183.3 899.3,180.5 912.7,181.8 926.1,182.5 939.5,185.8 953.0,191.4 966.4,205.6 979.8,217.6 993.2,223.9 1006.6,225.1 1020.0,227.6 1033.5,231.4 1046.9,234.6 1060.3,236.2 1073.7,237.1 1087.1,237.6 1100.5,237.5 1114.0,232.6 1127.4,228.9 1140.8,226.4 1154.2,225.1 1167.6,220.9 1181.0,216.3 1194.4,212.1 1207.9,212.0 1221.3,199.4 1234.7,184.5 1248.1,181.2 1261.5,176.8" fill="none" stroke="#e41c1c" stroke-width="2.4" stroke-linejoin="round" stroke-linecap="round" />
<polyline points="14.0,226.0 68.0,250.0 121.0,290.0 148.0,306.3 161.4,318.6 174.8,327.7 188.2,336.8 201.7,345.2 215.1,351.7 228.5,357.5 241.9,361.5 255.3,362.9 268.7,360.3 282.2,353.8 295.6,347.0 309.0,341.1 322.4,338.3 335.8,329.2 349.2,323.4 362.7,318.5 376.1,315.1 389.5,312.5 402.9,310.0 416.3,309.5 429.7,308.7 443.2,308.0 456.6,307.7 470.0,306.8 483.4,306.3 496.8,305.1 510.2,302.8 523.6,300.8 537.1,300.0 550.5,298.0 563.9,294.5 577.3,294.9 590.7,294.2 604.1,291.0 617.6,288.4 631.0,285.1 644.4,280.9 657.8,277.6 671.2,272.5 684.6,267.9 698.1,261.4 711.5,257.0 724.9,254.7 738.3,254.9 751.7,254.6 765.1,254.3 778.6,254.3 792.0,254.0 805.4,254.9 818.8,256.0 832.2,256.8 845.6,258.1 859.0,260.0 872.5,261.7 885.9,263.8 899.3,266.7 912.7,266.4 926.1,265.3 939.5,262.7 953.0,263.7 966.4,264.9 979.8,266.8 993.2,268.6 1006.6,269.6 1020.0,269.8 1033.5,269.8 1046.9,270.3 1060.3,271.7 1073.7,272.3 1087.1,272.7 1100.5,272.2 1114.0,270.0 1127.4,267.6 1140.8,266.6 1154.2,266.3 1167.6,263.6 1181.0,261.3 1194.4,258.4 1207.9,257.1 1221.3,252.1 1234.7,247.6 1248.1,245.5 1261.5,243.0" fill="none" stroke="#28dcf0" stroke-width="1.3" stroke-linejoin="round" stroke-linecap="round" stroke-opacity=".88"/>
<polyline points="14.0,229.0 68.0,262.0 121.0,316.0 148.0,336.4 161.4,354.3 174.8,365.3 188.2,375.7 201.7,384.8 215.1,390.0 228.5,394.1 241.9,395.1 255.3,391.5 268.7,381.5 282.2,365.1 295.6,350.1 309.0,338.3 322.4,333.4 335.8,316.9 349.2,308.2 362.7,301.6 376.1,298.2 389.5,296.2 402.9,294.5 416.3,296.3 429.7,297.2 443.2,298.0 456.6,299.2 470.0,298.9 483.4,299.5 496.8,298.4 510.2,295.4 523.6,292.9 537.1,292.6 550.5,290.3 563.9,285.0 577.3,287.4 590.7,287.5 604.1,282.5 617.6,279.1 631.0,274.5 644.4,268.4 657.8,264.4 671.2,257.0 684.6,251.1 698.1,241.7 711.5,236.9 724.9,236.1 738.3,240.0 751.7,242.2 765.1,243.9 778.6,245.6 792.0,246.7 805.4,249.7 818.8,252.7 832.2,254.9 845.6,257.7 859.0,261.4 872.5,264.3 885.9,268.0 899.3,272.6 912.7,271.1 926.1,268.1 939.5,262.7 953.0,264.6 966.4,266.7 979.8,270.0 993.2,272.8 1006.6,274.0 1020.0,273.5 1033.5,272.8 1046.9,273.4 1060.3,275.5 1073.7,275.9 1087.1,276.0 1100.5,274.4 1114.0,269.8 1127.4,265.2 1140.8,263.9 1154.2,263.7 1167.6,259.0 1181.0,255.4 1194.4,250.9 1207.9,249.9 1221.3,241.7 1234.7,234.9 1248.1,233.3 1261.5,230.6" fill="none" stroke="#1010e0" stroke-width="2.0" stroke-linejoin="round" stroke-linecap="round" stroke-opacity=".88"/>
<polyline points="14.0,232.0 68.0,285.0 121.0,338.0 148.0,352.0 161.4,379.7 174.8,391.3 188.2,401.8 201.7,409.8 215.1,411.0 228.5,411.5 241.9,407.5 255.3,396.8 268.7,376.7 282.2,348.2 295.6,326.4 309.0,312.7 322.4,312.2 335.8,289.0 349.2,282.3 362.7,278.8 376.1,280.2 389.5,282.5 402.9,284.0 416.3,290.8 429.7,294.3 443.2,296.7 456.6,299.3 470.0,298.8 483.4,299.8 496.8,297.8 510.2,292.4 523.6,288.8 537.1,289.7 550.5,286.4 563.9,278.1 577.3,284.8 590.7,285.8 604.1,277.2 617.6,272.7 631.0,266.4 644.4,258.0 657.8,254.1 671.2,244.0 684.6,237.4 698.1,224.8 711.5,221.6 724.9,225.3 738.3,235.9 751.7,241.4 765.1,244.7 778.6,247.6 792.0,248.9 805.4,253.6 818.8,257.9 832.2,260.1 845.6,263.6 859.0,268.3 872.5,271.5 885.9,275.8 899.3,281.7 912.7,275.8 926.1,268.7 939.5,258.6 953.0,263.5 966.4,267.7 979.8,273.5 993.2,277.4 1006.6,278.1 1020.0,275.8 1033.5,273.7 1046.9,274.5 1060.3,277.9 1073.7,277.9 1087.1,277.4 1100.5,274.0 1114.0,265.8 1127.4,258.7 1140.8,258.4 1154.2,259.8 1167.6,252.6 1181.0,248.2 1194.4,242.3 1207.9,243.3 1221.3,230.5 1234.7,221.7 1248.1,223.2 1261.5,221.7" fill="none" stroke="#1c7c7c" stroke-width="1.2" stroke-linejoin="round" stroke-linecap="round" />
<g stroke-width="1" shape-rendering="crispEdges"><line x1="1060.3" x2="1060.3" y1="68" y2="710" stroke="#cfcfcf"/><line x1="5" x2="1351" y1="287.2" y2="287.2" stroke="#a4a4a4"/></g>
<rect x="5" y="593.8" width="1346" height="3" fill="#d6f0f4"/>
<polyline points="13.3,674.0 41.7,667.7 67.7,663.3 95.0,659.0 108.3,656.7 135.0,656.7 175.0,656.7 201.7,659.0 228.3,660.0 255.0,661.0 295.0,662.7 321.7,663.3 348.3,663.3 375.0,662.3 415.0,661.7 455.0,661.0 480.0,659.3 510.0,658.3 537.3,657.3 564.0,658.3 604.0,661.7 644.0,668.3 670.7,672.3 697.3,676.0 724.0,678.3 764.0,680.0 804.0,679.3 844.0,677.7 885.0,675.7 925.0,673.3 960.0,671.7 1005.0,672.3 1060.0,672.5 1086.7,676.7 1113.3,679.3 1153.3,682.7 1180.0,684.0 1206.7,684.0 1233.3,683.3 1261.7,682.3" fill="none" stroke="#48a020" stroke-width="1.0" stroke-linejoin="round" stroke-linecap="round" />
<polyline points="13.3,652.7 27.7,650.3 41.7,652.3 67.7,653.3 95.0,655.0 108.3,656.7 135.0,661.7 148.3,663.3 161.7,665.0 175.0,666.0 188.3,665.0 201.7,663.3 215.0,662.3 228.3,660.0 241.7,659.3 255.0,660.7 268.3,662.7 295.0,663.3 321.7,664.0 335.0,664.0 348.3,662.7 375.0,661.0 388.3,660.0 415.0,660.0 428.3,657.3 441.7,655.3 455.0,653.3 468.3,653.3 480.0,654.0 510.0,654.3 523.3,657.3 537.3,661.0 564.0,666.7 590.7,674.3 617.3,680.0 644.0,683.3 670.7,682.3 697.3,681.7 724.0,677.7 750.7,677.7 777.3,674.3 790.7,672.3 804.0,671.0 830.7,672.3 844.0,673.3 857.3,674.3 870.7,674.3 885.0,670.0 898.3,667.7 911.7,668.3 925.0,670.0 938.3,671.0 960.0,673.3 991.7,675.0 1018.3,676.7 1045.0,677.0 1060.0,677.0 1073.3,683.3 1086.7,687.3 1100.0,689.0 1126.7,689.0 1153.3,688.3 1166.7,686.7 1180.0,684.0 1193.3,681.0 1206.7,679.3 1220.0,676.0 1233.3,672.7 1246.7,670.0 1261.7,667.3" fill="none" stroke="#e87820" stroke-width="1.0" stroke-linejoin="round" stroke-linecap="round" />
<polyline points="13.3,677.0 27.7,677.3 41.7,680.7 54.3,684.7 67.7,686.7 81.0,685.3 95.0,686.3 121.7,686.3 148.3,688.3 161.7,689.3 175.0,692.3 188.3,691.3 201.7,691.0 215.0,691.0 228.3,689.3 241.7,687.3 255.0,682.7 268.3,677.3 281.7,672.7 295.0,668.7 308.3,668.7 321.7,669.3 335.0,664.0 348.3,662.3 375.0,663.3 388.3,665.0 415.0,667.3 428.3,669.3 441.7,673.3 455.0,677.3 468.3,680.7 480.0,683.3 495.0,683.3 510.0,681.0 523.3,685.0 537.3,686.7 550.7,691.7 564.0,685.0 577.3,685.0 590.7,686.7 604.0,681.7 617.3,679.0 630.7,679.0 644.0,680.7 657.3,679.3 670.7,677.3 684.0,679.0 697.3,674.3 710.7,675.7 724.0,676.7 737.3,676.7 750.7,679.0 764.0,676.7 777.3,674.3 790.7,676.7 804.0,678.3 817.3,679.0 830.7,679.0 844.0,676.7 857.3,683.3 870.7,683.3 885.0,696.7 898.3,696.7 911.7,686.7 925.0,678.3 938.3,676.7 951.7,678.3 960.0,680.0 976.7,681.7 991.7,682.3 1005.0,680.0 1018.3,676.7 1031.7,676.7 1045.0,679.3 1060.0,679.3 1073.3,681.7 1086.7,680.0 1100.0,681.7 1113.3,682.3 1126.7,683.3 1140.0,684.3 1153.3,681.7 1166.7,679.0 1180.0,677.3 1193.3,681.7 1206.7,679.0 1220.0,675.0 1233.3,672.3 1246.7,675.0 1261.7,675.0" fill="none" stroke="#e01010" stroke-width="1.1" stroke-linejoin="round" stroke-linecap="round" />
<polyline points="13.3,689.0 27.7,690.0 41.7,684.3 54.3,674.3 67.7,673.0 81.0,674.0 108.3,674.0 135.0,672.7 148.3,670.7 161.7,665.7 175.0,665.0 188.3,666.7 201.7,666.7 215.0,664.7 228.3,666.7 241.7,676.7 255.0,678.7 268.3,679.0 281.7,680.7 295.0,681.7 308.3,684.0 321.7,681.0 335.0,686.0 348.3,693.7 375.0,693.7 388.3,692.0 415.0,690.7 441.7,689.3 455.0,687.7 480.0,686.3 495.0,686.7 511.7,690.0 523.3,689.0 537.3,685.0 550.7,679.0 564.0,677.7 577.3,681.7 590.7,678.3 604.0,680.0 617.3,682.3 630.7,684.3 644.0,685.7 670.7,686.7 697.3,689.0 710.7,689.0 737.3,686.7 750.7,686.7 764.0,689.0 777.3,690.0 790.7,689.0 804.0,685.0 817.3,684.0 830.7,680.0 844.0,679.0 857.3,673.3 870.7,670.7 885.0,665.0 898.3,659.0 911.7,666.7 925.0,675.0 938.3,676.0 951.7,673.3 960.0,672.3 976.7,671.7 991.7,676.7 1005.0,678.3 1018.3,681.0 1031.7,681.0 1045.0,683.3 1060.0,683.3 1073.3,684.0 1086.7,686.7 1100.0,686.0 1113.3,685.7 1126.7,685.0 1140.0,688.3 1153.3,687.7 1166.7,692.7 1180.0,692.7 1193.3,691.7 1206.7,691.0 1220.0,692.3 1233.3,694.0 1246.7,690.0 1261.7,690.0" fill="none" stroke="#28e0f0" stroke-width="2.4" stroke-linejoin="round" stroke-linecap="round" />
<path d="M908 390v23.700" stroke="#f8b414" stroke-width="5.600"/><path d="M902.200 393.700l5.800-8.800 5.800 8.800z" fill="#f8b414" stroke="#f8b414" stroke-width="2.400" stroke-linejoin="round"/>
</svg>
<div class="abs" style="left:947px;top:395.500px;font-size:19px;line-height:26px;color:#f2b01c;white-space:nowrap;letter-spacing:-1.150px;font-family:'Noto Sans CJK JP','IPAGothic',sans-serif;font-weight:500">先行スパンでサポート</div>
<div class="abs" style="left:30px;top:73px;width:13.5px;height:17px;border-radius:2px;background:linear-gradient(180deg,#fff,#c8c8c8)"><div class="abs" style="left:2.900px;top:2.300px;border:3.800px solid transparent;border-bottom:5.500px solid #1c1c1c"></div></div>
<div class="pill" style="left:46.5px;top:73.500px;width:66.5px"><i style="background:#e02020"></i>転換線(9)</div>
<div class="pill" style="left:116.0px;top:73.500px;width:70.5px"><i style="background:#c8b040"></i>基準線(26)</div>
<div class="pill" style="left:190.5px;top:73.500px;width:69.0px"><i style="background:#8c8ce8"></i>先行1(26)</div>
<div class="pill" style="left:262.5px;top:73.500px;width:69.5px"><i style="background:#28dc48"></i>先行2(52)</div>
<div class="pill" style="left:335.0px;top:73.500px;width:69.0px"><i style="background:#48a818"></i>遅行1(26)</div>
<div class="pill" style="left:406.5px;top:73.500px;width:94.0px"><i style="background:#2c2c2c"></i><span style="display:inline-block;letter-spacing:-.55px;margin-right:.55px">ボリンジャー</span>(20)</div>
<div class="pill" style="left:503.5px;top:73.500px;width:95.0px"><i style="background:#f4a0a0"></i><span style="display:inline-block;letter-spacing:-.55px;margin-right:.55px">ボリンジャー</span>(1σ)</div>
<div class="pill" style="left:601.5px;top:73.500px;width:95.0px"><i style="background:#c040b0"></i><span style="display:inline-block;letter-spacing:-.55px;margin-right:.55px">ボリンジャー</span>(2σ)</div>
<div class="pill" style="left:699.5px;top:73.500px;width:95.5px"><i style="background:#e01010"></i><span style="display:inline-block;letter-spacing:-.55px;margin-right:.55px">ボリンジャー</span>(3σ)</div>
<div class="pill" style="left:798.5px;top:73.500px;width:99.0px"><i style="background:#6cc4cc"></i><span style="display:inline-block;letter-spacing:-.55px;margin-right:.55px">ボリンジャー</span>(-1σ)</div>
<div class="pill" style="left:900.5px;top:73.500px;width:99.5px"><i style="background:#3c98d0"></i><span style="display:inline-block;letter-spacing:-.55px;margin-right:.55px">ボリンジャー</span>(-2σ)</div>
<div class="pill" style="left:1003.5px;top:73.500px;width:100.0px"><i style="background:#1010c8"></i><span style="display:inline-block;letter-spacing:-.55px;margin-right:.55px">ボリンジャー</span>(-3σ)</div>
<div class="pill" style="left:1107.5px;top:73.500px;width:57.0px"><i style="background:#148080"></i>EMA(5)</div>
<div class="pill" style="left:1167.5px;top:73.500px;width:64.0px"><i style="background:#0808e0"></i>EMA(10)</div>
<div class="pill" style="left:1234.5px;top:73.500px;width:64.0px"><i style="background:#28e4f4"></i>EMA(20)</div>
<div class="abs" style="left:30px;top:602px;width:13.5px;height:17.500px;border-radius:2px;background:linear-gradient(180deg,#fff,#c8c8c8)"><div class="abs" style="left:2.900px;top:2.600px;border:3.800px solid transparent;border-bottom:5.500px solid #1c1c1c"></div></div>
<div class="pill" style="left:48.4px;top:603px;width:62px"><i style="background:#e01010"></i>+DI(14)</div>
<div class="pill" style="left:114.5px;top:603px;width:59.2px"><i style="background:#28e4f4"></i>-DI(14)</div>
<div class="pill" style="left:177.6px;top:603px;width:63px"><i style="background:#e87820"></i>ADX(14)</div>
<div class="pill" style="left:244.4px;top:603px;width:71px"><i style="background:#48a818"></i>ADXR(14)</div>
<svg class="abs" style="left:1273.500px;top:213px" width="9" height="9"><path d="M0 4.500L9 0v9z" fill="#d81818"/></svg>
<div class="abs" style="left:1287px;top:203.500px;font-size:9.8px;font-weight:bold;color:#d81414;line-height:12px">1.29390</div>
<div class="abs" style="left:1287px;top:219.200px;font-size:9.8px;font-weight:bold;color:#2080d0;line-height:12px">1.29384</div>
<div class="abs" style="left:1292px;top:261px;width:55.500px;height:22px;border-radius:5px;background:rgba(76,76,76,.95);border:1px solid #6c6c6c;box-shadow:0 0 0 1px rgba(40,40,40,.8);color:#fff;font-size:10.300px;font-weight:bold;line-height:20px;text-align:center">1.28966</div>
<div class="abs" style="left:976.500px;top:688px;width:80px;height:22px;border-radius:5px;background:rgba(78,78,78,.95);border:1px solid #8a8a8a;color:#fff;font-size:10.500px;font-weight:bold;line-height:20px;text-align:center;white-space:nowrap">10/04 03:00</div>
<div id="tip" class="abs"><div class="b l" style="top:2.3px;font-size:13.2px;">10/04 03:00</div><div class="" style="top:19.3px;">始値:<span>1.29033</span></div><div class="" style="top:36.3px;">高値:<span>1.29093</span></div><div class="" style="top:53.3px;">安値:<span>1.28966</span></div><div class="" style="top:70.3px;">終値:<span>1.28982</span></div><div class="b" style="top:87.3px;">一目均衡表</div><div class="" style="top:104.3px;">転換線(9):<span>1.29086</span></div><div class="" style="top:121.3px;">基準線(26):<span>1.29122</span></div><div class="" style="top:138.3px;">先行1(26):<span>1.29287</span></div><div class="" style="top:155.3px;">先行2(52):<span>1.28858</span></div><div class="" style="top:172.3px;">遅行(26):</div><div class="b" style="top:189.3px;"><span style="position:static;letter-spacing:.9px">ボリンジャーバンド</span></div><div class="" style="top:206.3px;">Mid(20):<span>1.29055</span></div><div class="" style="top:223.3px;">1σ(20):<span>1.29129</span></div><div class="" style="top:240.3px;">2σ(20):<span>1.29203</span></div><div class="" style="top:257.3px;">3σ(20):<span>1.29276</span></div><div class="" style="top:274.3px;">-1σ(20):<span>1.28982</span></div><div class="" style="top:291.3px;">-2σ(20):<span>1.28908</span></div><div class="" style="top:308.3px;">-3σ(20):<span>1.28834</span></div><div class="b" style="top:325.3px;">指数平滑移動平均線</div><div class="" style="top:342.3px;">EMA(5):<span>1.29026</span></div><div class="" style="top:359.3px;">EMA(10):<span>1.29041</span></div><div class="" style="top:376.3px;">EMA(20):<span>1.29063</span></div><div class="b" style="top:393.3px;">DMI</div><div class="" style="top:410.3px;">+DI(14):<span>20.3</span></div><div class="" style="top:427.3px;">-DI(14):<span>16.6</span></div><div class="" style="top:444.3px;">ADX(14):<span>23.5</span></div><div class="" style="top:461.3px;">ADXR(14):<span>28.4</span></div><div style="top:393px;left:0;right:0;height:1px;background:rgba(190,190,190,.8)"></div></div>
<div class="ax" style="top:77.4px">1.3020</div>
<div class="ax" style="top:110.5px">1.3000</div>
<div class="ax" style="top:143.5px">1.2980</div>
<div class="ax" style="top:176.6px">1.2960</div>
<div class="ax" style="top:209.7px">1.2940</div>
<div class="ax" style="top:242.7px">1.2920</div>
<div class="ax" style="top:275.8px">1.2900</div>
<div class="ax" style="top:308.9px">1.2880</div>
<div class="ax" style="top:342.0px">1.2860</div>
<div class="ax" style="top:375.0px">1.2840</div>
<div class="ax" style="top:408.1px">1.2820</div>
<div class="ax" style="top:441.2px">1.2800</div>
<div class="ax" style="top:474.2px">1.2780</div>
<div class="ax" style="top:507.3px">1.2760</div>
<div class="ax" style="top:540.4px">1.2740</div>
<div class="ax" style="top:573.5px">1.2720</div>
<div class="ax" style="top:601.8px">100.00</div>
<div class="ax" style="top:647.3px">50.000</div>
<div class="ax" style="top:692.6px">0.0000</div>
<div class="abs" style="left:1402px;top:69px;width:14px;height:524px;background:#c6e1e6"></div>
<div class="abs" style="left:1402px;top:599px;width:14px;height:111px;background:#c6e1e6"></div>
<div class="sb up" style="top:69px"></div><div class="sb dn" style="top:578.800px"></div><div class="sb up" style="top:599px"></div><div class="sb dn" style="top:695.500px"></div>
<div class="zb p" style="top:68.800px"><b></b><u></u></div><div class="zb" style="top:577.500px"><b></b></div><div class="zb p" style="top:598px"><b></b><u></u></div><div class="zb" style="top:693.500px"><b></b></div>
<div class="abs" style="left:1426px;top:93px;width:3px;height:470px;border:1px solid #8a8f90;border-radius:1.500px;background:#e8f0f0"></div>
<div class="abs" style="left:1426px;top:622px;width:3px;height:56px;border:1px solid #8a8f90;border-radius:1.500px;background:#e8f0f0"></div>
<svg class="knob" style="top:558.500px" viewBox="0 0 13 12"><path d="M.8 6L4.500.7h6.500a1.400 1.400 0 011.400 1.400v7.800a1.400 1.400 0 01-1.400 1.400H4.500z" fill="#f4f4f4" stroke="#8a8a8a" stroke-width=".9"/><path d="M6 4h4.500M6 6h4.500M6 8h4.500" stroke="#a0a0a0" stroke-width=".8"/></svg>
<svg class="knob" style="top:675.600px" viewBox="0 0 13 12"><path d="M.8 6L4.500.7h6.500a1.400 1.400 0 011.400 1.400v7.800a1.400 1.400 0 01-1.400 1.400H4.500z" fill="#f4f4f4" stroke="#8a8a8a" stroke-width=".9"/><path d="M6 4h4.500M6 6h4.500M6 8h4.500" stroke="#a0a0a0" stroke-width=".8"/></svg>
<div class="xl" style="left:7.500px;transform:none">09/28 20:00</div>
<div class="xl" style="left:150.0px">10/01 07:00</div>
<div class="xl" style="left:217.1px">12:00</div>
<div class="xl" style="left:297.6px">18:00</div>
<div class="xl" style="left:378.1px">10/02 00:00</div>
<div class="xl" style="left:458.6px">06:00</div>
<div class="xl" style="left:539.1px">12:00</div>
<div class="xl" style="left:619.6px">18:00</div>
<div class="xl" style="left:700.1px">10/03 00:00</div>
<div class="xl" style="left:780.6px">06:00</div>
<div class="xl" style="left:861.0px">12:00</div>
<div class="xl" style="left:941.5px">18:00</div>
<div class="xl" style="left:1022.0px">10/04 00:00</div>
<div class="xl" style="left:1102.5px">06:00</div>
<div class="xl" style="left:1183.0px">12:00</div>
<div class="xl" style="left:1263.5px">18:00</div>
<div class="xl" style="left:1343.2px">10/05 00:00</div>
<div class="abs" style="left:13.300px;top:732.500px;width:1331px;height:24.500px;background:#fff"></div>
<div class="abs" style="left:1192px;top:732.500px;width:130px;height:24.500px;background:#ccdcff"></div>
<svg class="abs" style="left:0;top:732px" width="1440" height="26" viewBox="0 732 1440 26"><polyline points="14.0,753.5 17.2,753.8 20.4,753.5 23.6,753.3 26.8,753.5 30.0,753.5 33.2,753.2 36.4,753.3 39.6,753.7 42.8,753.9 46.0,753.7 49.2,754.1 52.4,754.3 55.6,754.1 58.8,753.7 62.0,754.0 65.2,753.9 68.4,753.8 71.6,753.7 74.8,754.4 78.0,754.4 81.2,754.3 84.4,754.3 87.6,754.7 90.8,754.2 94.0,754.1 97.2,754.1 100.4,754.5 103.6,754.1 106.8,754.4 110.0,754.6 113.2,754.9 116.4,754.4 119.6,754.6 122.8,754.5 126.0,754.4 129.2,753.8 132.4,754.2 135.6,754.1 138.8,754.2 142.0,753.9 145.2,754.6 148.4,754.4 151.6,754.3 154.8,753.9 158.0,754.3 161.2,753.8 164.4,753.7 167.6,753.8 170.8,754.4 174.0,754.1 177.2,754.3 180.4,754.5 183.6,754.9 186.8,754.3 190.0,754.4 193.2,754.4 196.4,754.5 199.6,754.0 202.8,754.5 206.0,754.8 209.2,754.9 212.4,754.7 215.6,755.2 218.8,755.2 222.0,754.9 225.2,754.6 228.4,755.0 231.6,754.8 234.8,754.5 238.0,754.6 241.2,755.0 244.4,754.8 247.6,754.5 250.8,754.6 254.0,754.6 257.2,754.1 260.4,753.7 263.6,753.9 266.8,753.9 270.0,753.6 273.2,753.7 276.4,754.1 279.6,753.8 282.8,753.5 286.0,753.5 289.2,753.6 292.4,753.0 295.6,752.7 298.8,752.8 302.0,753.1 305.2,752.7 308.4,753.0 311.6,753.2 314.8,753.2 318.0,752.6 321.2,752.8 324.4,752.7 327.6,752.5 330.8,752.1 334.0,752.6 337.2,752.6 340.4,752.6 343.6,752.4 346.8,752.9 350.0,752.6 353.2,752.3 356.4,752.0 359.6,752.4 362.8,751.9 366.0,751.9 369.2,752.0 372.4,752.5 375.6,752.0 378.8,752.2 382.0,752.2 385.2,752.4 388.4,751.6 391.6,751.8 394.8,751.8 398.0,751.9 401.2,751.5 404.4,752.1 407.6,752.2 410.8,752.2 414.0,751.8 417.2,752.3 420.4,752.0 423.6,751.7 426.8,751.4 430.0,751.9 433.2,751.7 436.4,751.7 439.6,751.8 442.8,752.3 446.0,751.9 449.2,751.8 452.4,751.9 455.6,751.9 458.8,751.4 462.0,751.4 465.2,751.7 468.4,751.8 471.6,751.5 474.8,751.9 478.0,752.1 481.2,751.9 484.4,751.5 487.6,751.6 490.8,751.6 494.0,751.2 497.2,751.1 500.4,751.4 503.6,751.5 506.8,751.3 510.0,751.5 513.2,751.7 516.4,751.4 519.6,750.9 522.8,751.0 526.0,751.0 529.2,750.7 532.4,750.5 535.6,751.0 538.8,751.0 542.0,750.8 545.2,750.7 548.4,751.0 551.6,750.5 554.8,750.2 558.0,750.0 561.2,750.3 564.4,749.9 567.6,749.9 570.8,750.1 574.0,750.3 577.2,749.3 580.4,749.5 583.6,749.6 586.8,749.6 590.0,749.0 593.2,749.4 596.4,749.6 599.6,749.7 602.8,749.5 606.0,750.2 609.2,750.2 612.4,750.2 615.6,749.9 618.8,750.4 622.0,750.0 625.2,749.9 628.4,749.9 631.6,750.5 634.8,750.3 638.0,750.5 641.2,750.6 644.4,751.0 647.6,750.4 650.8,750.3 654.0,750.2 657.2,750.3 660.4,749.7 663.6,750.0 666.8,750.2 670.0,750.4 673.2,750.0 676.4,750.4 679.6,750.3 682.8,749.9 686.0,749.2 689.2,749.3 692.4,748.9 695.6,748.5 698.8,748.3 702.0,748.6 705.2,748.3 708.4,747.9 711.6,747.7 714.8,747.7 718.0,747.0 721.2,746.5 724.4,746.5 727.6,746.6 730.8,746.3 734.0,746.4 737.2,746.8 740.4,746.7 743.6,746.4 746.8,746.3 750.0,746.4 753.2,746.0 756.4,745.6 759.6,745.8 762.8,746.0 766.0,745.6 769.2,745.7 772.4,745.9 775.6,746.0 778.8,745.4 782.0,745.4 785.2,745.3 788.4,745.0 791.6,744.5 794.8,744.9 798.0,744.9 801.2,744.9 804.4,744.6 807.6,745.1 810.8,744.8 814.0,744.5 817.2,744.1 820.4,744.4 823.6,743.9 826.8,743.8 830.0,743.8 833.2,744.2 836.4,743.6 839.6,743.5 842.8,743.4 846.0,743.4 849.2,742.5 852.4,742.4 855.6,742.2 858.8,742.1 862.0,741.4 865.2,741.7 868.4,741.7 871.6,741.5 874.8,740.9 878.0,741.1 881.2,740.6 884.4,740.1 887.6,739.5 890.8,739.8 894.0,739.3 897.2,739.1 900.4,739.3 903.6,740.0 906.8,739.7 910.0,739.7 913.2,739.7 916.4,740.0 919.6,739.4 922.8,739.5 926.0,739.8 929.2,740.1 932.4,739.9 935.6,740.5 938.8,740.9 942.0,741.0 945.2,740.7 948.4,741.1 951.6,741.2 954.8,741.1 958.0,741.1 961.2,741.7 964.4,741.9 967.6,741.8 970.8,742.0 974.0,742.4 977.2,742.3 980.4,741.9 983.6,742.0 986.8,742.2 990.0,742.0 993.2,741.9 996.4,742.5 999.6,742.7 1002.8,742.7 1006.0,742.7 1009.2,743.1 1012.4,743.0 1015.6,742.7 1018.8,742.7 1022.0,743.1 1025.2,742.9 1028.4,743.0 1031.6,743.3 1034.8,743.8 1038.0,743.5 1041.2,743.7 1044.4,743.8 1047.6,743.9 1050.8,743.3 1054.0,743.6 1057.2,743.8 1060.4,744.0 1063.6,743.7 1066.8,744.3 1070.0,744.4 1073.2,744.4 1076.4,744.0 1079.6,744.5 1082.8,744.1 1086.0,744.0 1089.2,743.8 1092.4,744.5 1095.6,744.3 1098.8,744.4 1102.0,744.5 1105.2,745.0 1108.4,744.5 1111.6,744.5 1114.8,744.4 1118.0,744.7 1121.2,744.1 1124.4,744.4 1127.6,744.7 1130.8,745.0 1134.0,744.6 1137.2,745.1 1140.4,745.1 1143.6,745.0 1146.8,744.5 1150.0,744.9 1153.2,744.8 1156.4,744.7 1159.6,744.6 1162.8,745.1 1166.0,744.9 1169.2,744.6 1172.4,744.4 1175.6,744.6 1178.8,744.0 1182.0,743.6 1185.2,743.4 1188.4,743.6 1191.6,743.1 1194.8,743.1 1198.0,743.5 1201.2,743.7 1204.4,743.4 1207.6,743.4 1210.8,743.6 1214.0,743.3 1217.2,742.9 1220.4,743.2 1223.6,743.4 1226.8,743.3 1230.0,743.3 1233.2,743.7 1236.4,743.9 1239.6,743.5 1242.8,743.5 1246.0,743.6 1249.2,743.4 1252.4,743.0 1255.6,743.4 1258.8,743.7 1262.0,743.8 1265.2,743.6 1268.4,744.2 1271.6,744.2 1274.8,744.0 1278.0,743.7 1281.2,744.1 1284.4,743.7 1287.6,743.5 1290.8,743.4 1294.0,744.0 1297.2,743.7 1300.4,743.7 1303.6,743.7 1306.8,743.9 1310.0,743.1" fill="none" stroke="#111" stroke-width="1.1" stroke-linejoin="round" stroke-linecap="round" /><path d="M579.500 733v23" stroke="#c8c8c8" stroke-width="1"/><path d="M1205.500 733v23" stroke="#b0c0e8" stroke-width="1"/></svg>
<div class="abs" style="left:15.8px;top:733.500px;width:59.500px;height:13.500px;border-radius:4px;background:#8e8e8e;color:#fff;font-weight:bold;font-size:11.500px;line-height:13.500px;text-align:center;letter-spacing:-.1px">2012/08</div>
<div class="abs" style="left:579.5px;top:733.500px;width:59.500px;height:13.500px;border-radius:4px;background:#8e8e8e;color:#fff;font-weight:bold;font-size:11.500px;line-height:13.500px;text-align:center;letter-spacing:-.1px">2012/09</div>
<div class="abs" style="left:1205.5px;top:733.500px;width:59.500px;height:13.500px;border-radius:4px;background:#a8b4d8;color:#fff;font-weight:bold;font-size:11.500px;line-height:13.500px;text-align:center;letter-spacing:-.1px">2012/10</div>
<svg class="abs" style="left:1185px;top:744.500px" width="13" height="13" viewBox="0 0 13 13"><path d="M6.500.6L11.800 4.500v6.500a1.400 1.400 0 01-1.400 1.400H2.600a1.400 1.400 0 01-1.400-1.400V4.500z" fill="#f0f0f0" stroke="#8a8a8a" stroke-width=".9"/><path d="M4.500 6v4.500M6.500 6v4.500M8.500 6v4.500" stroke="#a0a0a0" stroke-width=".8"/></svg>
<svg class="abs" style="left:1315px;top:744.500px" width="13" height="13" viewBox="0 0 13 13"><path d="M6.500.6L11.800 4.500v6.500a1.400 1.400 0 01-1.400 1.400H2.600a1.400 1.400 0 01-1.400-1.400V4.500z" fill="#f0f0f0" stroke="#8a8a8a" stroke-width=".9"/><path d="M4.500 6v4.500M6.500 6v4.500M8.500 6v4.500" stroke="#a0a0a0" stroke-width=".8"/></svg>
<div class="abs" style="left:3px;top:756.500px;width:1435px;height:1.500px;background:#7fdaf2"></div>
<div class="abs" style="left:0;top:762px;width:1440px;height:21px;background:linear-gradient(180deg,#f0f0f0,#c4c4c4)"></div>
<svg class="abs" style="left:0;top:762px" width="96" height="21" viewBox="0 0 96 21"><g fill="#111"><rect x="7.500" y="5" width="1.800" height="11"/><path d="M17.500 5v11L10 10.500z"/><path d="M39 5v11L31.700 10.500z"/><path d="M57 5v11l7.500-5.500z"/><path d="M78.500 5v11l7.500-5.500z"/><rect x="86.500" y="5" width="1.800" height="11"/></g></svg>
<div class="abs" style="left:17px;top:780.500px;width:26px;height:9px;border-radius:50%;border:1px solid #9cc0e4;background:#e4eef8"></div>
<div class="tab" style="left:96.0px;">EUR/USD 月足 一目均...</div>
<div class="tab" style="left:239.1px;">EUR/USD 週足 一目均...</div>
<div class="tab" style="left:382.2px;">EUR/USD 日足 一目均...</div>
<div class="tab" style="left:525.3px;">EUR/USD 8時間足 一...</div>
<div class="tab" style="left:668.4px;">EUR/USD 4時間足 一...</div>
<div class="tab act" style="left:811.5px;">EUR/USD 1時間足 ...</div>
<div class="tab" style="left:954.6px;">EUR/USD 5分足 一目...</div>
<div class="tab" style="left:1097.7px;">比較<span style="letter-spacing:-.65px">チャート(パーセント</span>...</div>
<div class="tab" style="left:1240.8px;text-align:center;padding-left:0;"><span style="letter-spacing:-1.200px">ニュース</span></div>
<div class="tab" style="left:1383.9px;padding-left:7px;">EUR/USD</div>
<div class="abs" style="left:1417px;top:762px;width:23px;height:21px;background:linear-gradient(180deg,#fafafa,#d8d8d8);border-left:1px solid #888"><div class="abs" style="left:4.500px;top:8.500px;width:12px;height:3.500px;background:#111"></div><div class="abs" style="left:8.700px;top:4.300px;width:3.500px;height:12px;background:#111"></div></div>
</body></html>
